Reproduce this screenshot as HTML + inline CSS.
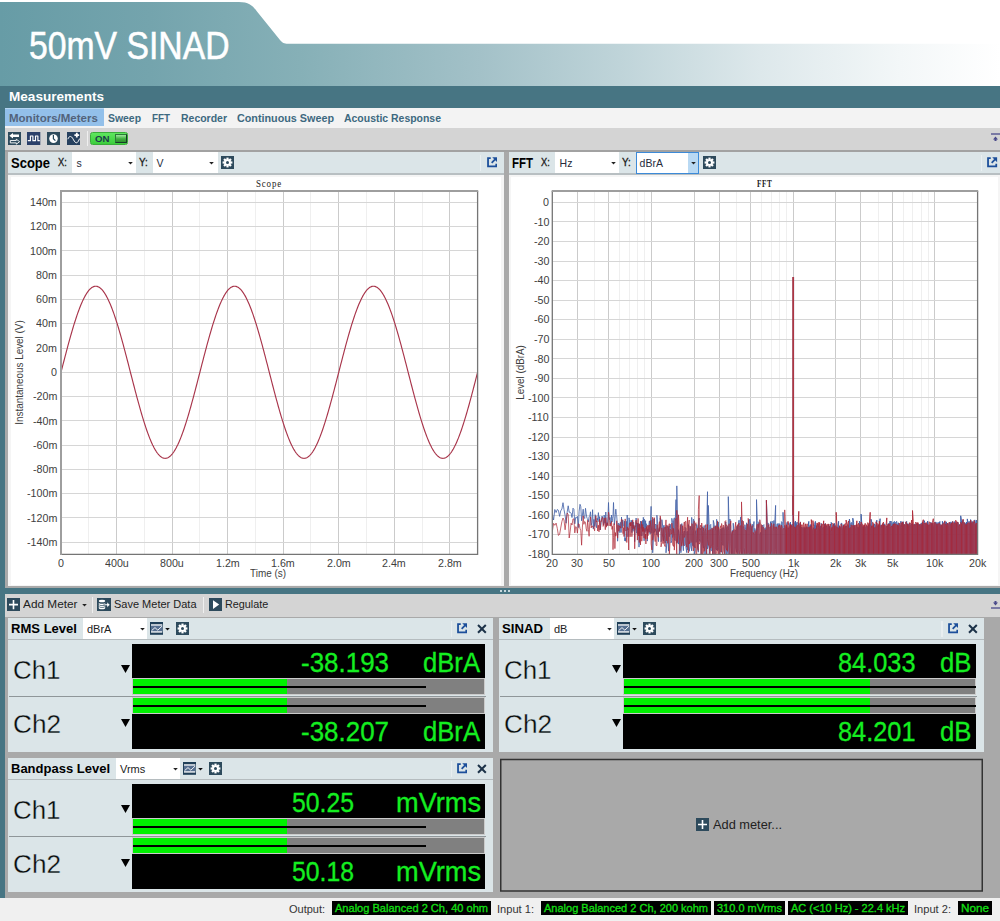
<!DOCTYPE html>
<html><head><meta charset="utf-8"><title>50mV SINAD</title>
<style>
html,body{margin:0;padding:0;background:#fff;}
body{width:1000px;height:921px;position:relative;overflow:hidden;font-family:"Liberation Sans",sans-serif;}
.b{position:absolute;display:block;}
.t{position:absolute;white-space:nowrap;transform-origin:0 50%;}
</style></head><body>
<div class="b" style="left:0px;top:0px;width:1000px;height:86px;background:linear-gradient(90deg,#679ca6 0%,#74a4ad 15%,#86b0b7 30%,#a3c1c8 48%,#bfd4d9 62%,#dde8eb 76%,#f3f7f8 90%,#ffffff 100%);"></div>
<svg class="b" style="left:0px;top:0px;" width="1000" height="46" viewBox="0 0 1000 46"><path d="M0,2 L239,2 C249,2 253,6 257,11.5 L280,40 C282.5,43 284,43.7 288,43.7 L1000,43.7 L1000,0 L0,0 Z" fill="#fff"/></svg>
<div class="t" style="left:29.30px;top:23.60px;font-size:39px;line-height:43.00px;color:#fff;transform:scaleX(0.8646);-webkit-text-stroke:0.55px #fff;">50mV SINAD</div>
<div class="b" style="left:0px;top:86px;width:1000px;height:22px;background:#477583;"></div>
<div class="b" style="left:0px;top:86px;width:5px;height:812px;background:#477583;"></div>
<div class="t" style="left:9.00px;top:89.30px;font-size:13px;line-height:15.00px;color:#fff;font-weight:bold;transform:scaleX(1.0435);">Measurements</div>
<div class="b" style="left:5px;top:108px;width:995px;height:20px;background:#f3f3f3;"></div>
<div class="b" style="left:5px;top:108px;width:99px;height:18px;background:#93c0ea;"></div>
<div class="b" style="left:5px;top:108px;width:99px;height:1px;background:#b5d5f2;"></div>
<div class="t" style="left:9.00px;top:112.00px;font-size:11.5px;line-height:12.00px;color:#52637b;font-weight:bold;">Monitors/Meters</div>
<div class="t" style="left:108.00px;top:112.00px;font-size:11.5px;line-height:12.00px;color:#3d6980;font-weight:bold;transform:scaleX(0.9058);">Sweep</div>
<div class="t" style="left:152.00px;top:112.00px;font-size:11.5px;line-height:12.00px;color:#3d6980;font-weight:bold;transform:scaleX(0.8542);">FFT</div>
<div class="t" style="left:181.00px;top:112.00px;font-size:11.5px;line-height:12.00px;color:#3d6980;font-weight:bold;transform:scaleX(0.9110);">Recorder</div>
<div class="t" style="left:237.00px;top:112.00px;font-size:11.5px;line-height:12.00px;color:#3d6980;font-weight:bold;transform:scaleX(0.9372);">Continuous Sweep</div>
<div class="t" style="left:344.00px;top:112.00px;font-size:11.5px;line-height:12.00px;color:#3d6980;font-weight:bold;transform:scaleX(0.9089);">Acoustic Response</div>
<div class="b" style="left:5px;top:128px;width:995px;height:22px;background:#d4d4d4;"></div>
<div class="b" style="left:5px;top:149.5px;width:995px;height:2.5px;background:#a2a2a2;"></div>
<svg class="b" style="left:8px;top:131.8px;" width="13.3" height="13.2" viewBox="0 0 13.3 13.2"><rect width="13.3" height="13.2" fill="#2d4a5c"/><path d="M1.3,3.8 L5,1 V2.5 H11 V5.1 H5 V6.6 Z" fill="#fff"/><path d="M2.3,8.5 H8.3 V7.2 L11.6,9.7 L8.3,12.2 V10.9 H2.3 Z" fill="none" stroke="#fff" stroke-width="0.9"/></svg>
<svg class="b" style="left:27.3px;top:131.8px;" width="13.3" height="13.2" viewBox="0 0 13.3 13.2"><rect width="13.3" height="13.2" fill="#2b406a"/><path d="M0.8,8.7 H3.4 V4 H5.9 V8.7 H8.5 V4 H10.9 V8.7 H12.8" stroke="#fff" stroke-width="1.15" fill="none" stroke-linejoin="round"/></svg>
<svg class="b" style="left:47.1px;top:131.8px;" width="13.3" height="13.2" viewBox="0 0 13.3 13.2"><rect width="13.3" height="13.2" fill="#2d4a5c"/><circle cx="6.5" cy="6.6" r="4.3" fill="#fff"/><path d="M6.4,3 V6.7 L8.4,8.6" stroke="#24465a" stroke-width="1.2" fill="none"/></svg>
<svg class="b" style="left:66.5px;top:131.8px;" width="13.3" height="13.2" viewBox="0 0 13.3 13.2"><rect width="13.3" height="13.2" fill="#27415f"/><path d="M0.9,7.2 C2,4.2 3,4.4 3.9,4.6 C5.8,5 7.2,10.8 9.4,10.8 C10.8,10.8 11.8,8.5 12.6,6.6" stroke="#fff" stroke-width="1" fill="none"/><path d="M7.4,3.2 H12.2 M9.8,0.8 V5.6" stroke="#fff" stroke-width="1.8"/></svg>
<div class="b" style="left:87px;top:131px;width:1px;height:15px;background:#efefef;"></div>
<div class="b" style="left:90px;top:132px;width:38px;height:13px;border-radius:2.5px;background:linear-gradient(#5fe65f,#48d848 60%,#3ccc3c);border:1px solid #39ad39;box-sizing:border-box"></div>
<div class="t" style="left:95.00px;top:132.80px;font-size:9.5px;line-height:11.00px;color:#1d3a4c;font-weight:bold;transform:scaleX(1.0175);">ON</div>
<div class="b" style="left:114.5px;top:134px;width:12px;height:9px;background:linear-gradient(#9ee89e,#3fae3f 55%,#2f8f2f);border:1px solid #2c7a3a;border-right-color:#173a2a;border-bottom-color:#173a2a;box-sizing:border-box"></div>
<svg class="b" style="left:989px;top:132px;" width="11" height="12" viewBox="0 0 11 12"><path d="M2,2 H11" stroke="#4a4a8a" stroke-width="1.3"/><path d="M6.5,4.5 L9,7.5 H7.5 V9 H5.5 V7.5 H4 Z" fill="#4a4a8a"/></svg>
<div class="b" style="left:5px;top:152px;width:995px;height:436px;background:#a9a9a9;"></div>
<div class="b" style="left:8px;top:152px;width:495.8px;height:21px;background:#dbe5e8;"></div>
<div class="b" style="left:8px;top:173px;width:495.8px;height:1.5px;background:#b8bfc2;"></div>
<div class="b" style="left:8px;top:174.5px;width:495.8px;height:411.5px;background:#f5f5f5;"></div>
<div class="b" style="left:10.5px;top:177px;width:490.8px;height:407.5px;background:#fff;"></div>
<div class="t" style="left:11.00px;top:154.50px;font-size:14px;line-height:16.00px;color:#000;font-weight:bold;transform:scaleX(0.9283);">Scope</div>
<div class="t" style="left:58.30px;top:156.60px;font-size:10px;line-height:11.00px;color:#1a1a1a;transform:scaleX(0.9314);-webkit-text-stroke:0.3px #1a1a1a;">X:</div>
<div class="b" style="left:72px;top:152px;width:64px;height:21px;background:#fff;"></div>
<div class="t" style="left:76.60px;top:157.00px;font-size:10.5px;line-height:12.00px;color:#262b3a;">s</div>
<svg class="b" style="left:128px;top:161.7px;" width="6" height="4" viewBox="0 0 6 4"><path d="M0.2,0 H4.8 L2.5,2.6 Z" fill="#222"/></svg>
<div class="t" style="left:139.30px;top:156.60px;font-size:10px;line-height:11.00px;color:#1a1a1a;transform:scaleX(0.9892);-webkit-text-stroke:0.3px #1a1a1a;">Y:</div>
<div class="b" style="left:153px;top:152px;width:65px;height:21px;background:#fff;"></div>
<div class="t" style="left:156.60px;top:157.00px;font-size:10.5px;line-height:12.00px;color:#262b3a;">V</div>
<svg class="b" style="left:209px;top:161.7px;" width="6" height="4" viewBox="0 0 6 4"><path d="M0.2,0 H4.8 L2.5,2.6 Z" fill="#222"/></svg>
<svg class="b" style="left:221px;top:156px;" width="13" height="13" viewBox="0 0 13 13"><rect width="13" height="13" fill="#2d4a5c"/><rect x="5.4" y="1.6" width="2.2" height="2.6" fill="#fff" transform="rotate(0 6.5 6.5)"/><rect x="5.4" y="1.6" width="2.2" height="2.6" fill="#fff" transform="rotate(45 6.5 6.5)"/><rect x="5.4" y="1.6" width="2.2" height="2.6" fill="#fff" transform="rotate(90 6.5 6.5)"/><rect x="5.4" y="1.6" width="2.2" height="2.6" fill="#fff" transform="rotate(135 6.5 6.5)"/><rect x="5.4" y="1.6" width="2.2" height="2.6" fill="#fff" transform="rotate(180 6.5 6.5)"/><rect x="5.4" y="1.6" width="2.2" height="2.6" fill="#fff" transform="rotate(225 6.5 6.5)"/><rect x="5.4" y="1.6" width="2.2" height="2.6" fill="#fff" transform="rotate(270 6.5 6.5)"/><rect x="5.4" y="1.6" width="2.2" height="2.6" fill="#fff" transform="rotate(315 6.5 6.5)"/><circle cx="6.5" cy="6.5" r="3.3" fill="#fff"/><circle cx="6.5" cy="6.5" r="1.5" fill="#2d4a5c"/></svg>
<div class="b" style="left:480px;top:155px;width:1.2px;height:16px;background:#e9eff1;"></div>
<svg class="b" style="left:486.9px;top:157px;" width="10.3" height="10.6" viewBox="0 0 10.3 10.6"><path transform="scale(0.936 0.964)" d="M4,1.1 H1.1 V9.7 H9.9 V6.9" stroke="#1b4e9a" stroke-width="1.9" fill="none"/><path transform="scale(0.936 0.964)" d="M5,6 L8.6,2.4" stroke="#1b4e9a" stroke-width="1.8"/><path transform="scale(0.936 0.964)" d="M5.6,0.2 H10.8 V5.4 Z" fill="#1b4e9a"/></svg>
<div class="b" style="left:508.5px;top:152px;width:491.5px;height:21px;background:#dbe5e8;"></div>
<div class="b" style="left:508.5px;top:173px;width:491.5px;height:1.5px;background:#b8bfc2;"></div>
<div class="b" style="left:508.5px;top:174.5px;width:491.5px;height:411.5px;background:#f5f5f5;"></div>
<div class="b" style="left:511px;top:177px;width:486.5px;height:407.5px;background:#fff;"></div>
<div class="t" style="left:511.50px;top:154.50px;font-size:14px;line-height:16.00px;color:#000;font-weight:bold;transform:scaleX(0.8185);">FFT</div>
<div class="t" style="left:541.30px;top:156.60px;font-size:10px;line-height:11.00px;color:#1a1a1a;transform:scaleX(0.9314);-webkit-text-stroke:0.3px #1a1a1a;">X:</div>
<div class="b" style="left:555px;top:152px;width:64px;height:21px;background:#fff;"></div>
<div class="t" style="left:559.60px;top:157.00px;font-size:10.5px;line-height:12.00px;color:#262b3a;">Hz</div>
<svg class="b" style="left:611px;top:161.7px;" width="6" height="4" viewBox="0 0 6 4"><path d="M0.2,0 H4.8 L2.5,2.6 Z" fill="#222"/></svg>
<div class="t" style="left:622.30px;top:156.60px;font-size:10px;line-height:11.00px;color:#1a1a1a;transform:scaleX(0.9892);-webkit-text-stroke:0.3px #1a1a1a;">Y:</div>
<div class="b" style="left:636px;top:152px;width:63px;height:22px;background:#fff;border:1px solid #3c8ad8;box-sizing:border-box;"></div>
<div class="b" style="left:688px;top:153px;width:10px;height:20px;background:#b9d9f3;"></div>
<div class="t" style="left:639.60px;top:157.00px;font-size:10.5px;line-height:12.00px;color:#262b3a;">dBrA</div>
<svg class="b" style="left:691px;top:161.7px;" width="6" height="4" viewBox="0 0 6 4"><path d="M0.2,0 H4.8 L2.5,2.6 Z" fill="#222"/></svg>
<svg class="b" style="left:703px;top:156px;" width="13" height="13" viewBox="0 0 13 13"><rect width="13" height="13" fill="#2d4a5c"/><rect x="5.4" y="1.6" width="2.2" height="2.6" fill="#fff" transform="rotate(0 6.5 6.5)"/><rect x="5.4" y="1.6" width="2.2" height="2.6" fill="#fff" transform="rotate(45 6.5 6.5)"/><rect x="5.4" y="1.6" width="2.2" height="2.6" fill="#fff" transform="rotate(90 6.5 6.5)"/><rect x="5.4" y="1.6" width="2.2" height="2.6" fill="#fff" transform="rotate(135 6.5 6.5)"/><rect x="5.4" y="1.6" width="2.2" height="2.6" fill="#fff" transform="rotate(180 6.5 6.5)"/><rect x="5.4" y="1.6" width="2.2" height="2.6" fill="#fff" transform="rotate(225 6.5 6.5)"/><rect x="5.4" y="1.6" width="2.2" height="2.6" fill="#fff" transform="rotate(270 6.5 6.5)"/><rect x="5.4" y="1.6" width="2.2" height="2.6" fill="#fff" transform="rotate(315 6.5 6.5)"/><circle cx="6.5" cy="6.5" r="3.3" fill="#fff"/><circle cx="6.5" cy="6.5" r="1.5" fill="#2d4a5c"/></svg>
<div class="b" style="left:981px;top:155px;width:1.2px;height:16px;background:#e9eff1;"></div>
<svg class="b" style="left:987.4px;top:157px;" width="10.3" height="10.6" viewBox="0 0 10.3 10.6"><path transform="scale(0.936 0.964)" d="M4,1.1 H1.1 V9.7 H9.9 V6.9" stroke="#1b4e9a" stroke-width="1.9" fill="none"/><path transform="scale(0.936 0.964)" d="M5,6 L8.6,2.4" stroke="#1b4e9a" stroke-width="1.8"/><path transform="scale(0.936 0.964)" d="M5.6,0.2 H10.8 V5.4 Z" fill="#1b4e9a"/></svg>
<svg class="b" style="left:0;top:0" width="1000" height="600" viewBox="0 0 1000 600"><path d="M88.5,191.00 V554.40" stroke="#efefef" stroke-width="1"/><path d="M116.5,191.00 V554.40" stroke="#cbcbcb" stroke-width="1"/><path d="M144.5,191.00 V554.40" stroke="#efefef" stroke-width="1"/><path d="M172.5,191.00 V554.40" stroke="#cbcbcb" stroke-width="1"/><path d="M199.5,191.00 V554.40" stroke="#efefef" stroke-width="1"/><path d="M227.5,191.00 V554.40" stroke="#cbcbcb" stroke-width="1"/><path d="M255.5,191.00 V554.40" stroke="#efefef" stroke-width="1"/><path d="M283.5,191.00 V554.40" stroke="#cbcbcb" stroke-width="1"/><path d="M310.5,191.00 V554.40" stroke="#efefef" stroke-width="1"/><path d="M338.5,191.00 V554.40" stroke="#cbcbcb" stroke-width="1"/><path d="M366.5,191.00 V554.40" stroke="#efefef" stroke-width="1"/><path d="M394.5,191.00 V554.40" stroke="#cbcbcb" stroke-width="1"/><path d="M422.5,191.00 V554.40" stroke="#efefef" stroke-width="1"/><path d="M449.5,191.00 V554.40" stroke="#cbcbcb" stroke-width="1"/><path d="M61.00,542.5 H477.60" stroke="#d6d6d6" stroke-width="1"/><path d="M61.00,517.5 H477.60" stroke="#d6d6d6" stroke-width="1"/><path d="M61.00,493.5 H477.60" stroke="#d6d6d6" stroke-width="1"/><path d="M61.00,469.5 H477.60" stroke="#d6d6d6" stroke-width="1"/><path d="M61.00,445.5 H477.60" stroke="#d6d6d6" stroke-width="1"/><path d="M61.00,420.5 H477.60" stroke="#d6d6d6" stroke-width="1"/><path d="M61.00,396.5 H477.60" stroke="#d6d6d6" stroke-width="1"/><path d="M61.00,372.5 H477.60" stroke="#d6d6d6" stroke-width="1"/><path d="M61.00,348.5 H477.60" stroke="#d6d6d6" stroke-width="1"/><path d="M61.00,323.5 H477.60" stroke="#d6d6d6" stroke-width="1"/><path d="M61.00,299.5 H477.60" stroke="#d6d6d6" stroke-width="1"/><path d="M61.00,275.5 H477.60" stroke="#d6d6d6" stroke-width="1"/><path d="M61.00,250.5 H477.60" stroke="#d6d6d6" stroke-width="1"/><path d="M61.00,226.5 H477.60" stroke="#d6d6d6" stroke-width="1"/><path d="M61.00,202.5 H477.60" stroke="#d6d6d6" stroke-width="1"/><polyline points="61.00,372.30 61.69,369.60 62.39,366.90 63.08,364.20 63.78,361.52 64.47,358.84 65.17,356.18 65.86,353.53 66.55,350.90 67.25,348.29 67.94,345.71 68.64,343.15 69.33,340.63 70.03,338.13 70.72,335.67 71.42,333.24 72.11,330.85 72.80,328.50 73.50,326.20 74.19,323.94 74.89,321.73 75.58,319.56 76.28,317.45 76.97,315.40 77.66,313.40 78.36,311.46 79.05,309.58 79.75,307.76 80.44,306.00 81.14,304.31 81.83,302.69 82.52,301.14 83.22,299.65 83.91,298.24 84.61,296.90 85.30,295.64 86.00,294.45 86.69,293.33 87.38,292.30 88.08,291.34 88.77,290.47 89.47,289.67 90.16,288.96 90.86,288.33 91.55,287.78 92.25,287.32 92.94,286.94 93.63,286.64 94.33,286.43 95.02,286.30 95.72,286.26 96.41,286.30 97.11,286.43 97.80,286.64 98.49,286.94 99.19,287.32 99.88,287.78 100.58,288.33 101.27,288.96 101.97,289.67 102.66,290.47 103.35,291.34 104.05,292.30 104.74,293.33 105.44,294.45 106.13,295.64 106.83,296.90 107.52,298.24 108.21,299.65 108.91,301.14 109.60,302.69 110.30,304.31 110.99,306.00 111.69,307.76 112.38,309.58 113.08,311.46 113.77,313.40 114.46,315.40 115.16,317.45 115.85,319.56 116.55,321.73 117.24,323.94 117.94,326.20 118.63,328.50 119.32,330.85 120.02,333.24 120.71,335.67 121.41,338.13 122.10,340.63 122.80,343.15 123.49,345.71 124.18,348.29 124.88,350.90 125.57,353.53 126.27,356.18 126.96,358.84 127.66,361.52 128.35,364.20 129.04,366.90 129.74,369.60 130.43,372.30 131.13,375.00 131.82,377.70 132.52,380.40 133.21,383.08 133.91,385.76 134.60,388.42 135.29,391.07 135.99,393.70 136.68,396.31 137.38,398.89 138.07,401.45 138.77,403.97 139.46,406.47 140.15,408.93 140.85,411.36 141.54,413.75 142.24,416.10 142.93,418.40 143.63,420.66 144.32,422.87 145.01,425.04 145.71,427.15 146.40,429.20 147.10,431.20 147.79,433.14 148.49,435.02 149.18,436.84 149.87,438.60 150.57,440.29 151.26,441.91 151.96,443.46 152.65,444.95 153.35,446.36 154.04,447.70 154.74,448.96 155.43,450.15 156.12,451.27 156.82,452.30 157.51,453.26 158.21,454.13 158.90,454.93 159.60,455.64 160.29,456.27 160.98,456.82 161.68,457.28 162.37,457.66 163.07,457.96 163.76,458.17 164.46,458.30 165.15,458.34 165.84,458.30 166.54,458.17 167.23,457.96 167.93,457.66 168.62,457.28 169.32,456.82 170.01,456.27 170.70,455.64 171.40,454.93 172.09,454.13 172.79,453.26 173.48,452.30 174.18,451.27 174.87,450.15 175.56,448.96 176.26,447.70 176.95,446.36 177.65,444.95 178.34,443.46 179.04,441.91 179.73,440.29 180.43,438.60 181.12,436.84 181.81,435.02 182.51,433.14 183.20,431.20 183.90,429.20 184.59,427.15 185.29,425.04 185.98,422.87 186.67,420.66 187.37,418.40 188.06,416.10 188.76,413.75 189.45,411.36 190.15,408.93 190.84,406.47 191.53,403.97 192.23,401.45 192.92,398.89 193.62,396.31 194.31,393.70 195.01,391.07 195.70,388.42 196.40,385.76 197.09,383.08 197.78,380.40 198.48,377.70 199.17,375.00 199.87,372.30 200.56,369.60 201.26,366.90 201.95,364.20 202.64,361.52 203.34,358.84 204.03,356.18 204.73,353.53 205.42,350.90 206.12,348.29 206.81,345.71 207.50,343.15 208.20,340.63 208.89,338.13 209.59,335.67 210.28,333.24 210.98,330.85 211.67,328.50 212.36,326.20 213.06,323.94 213.75,321.73 214.45,319.56 215.14,317.45 215.84,315.40 216.53,313.40 217.23,311.46 217.92,309.58 218.61,307.76 219.31,306.00 220.00,304.31 220.70,302.69 221.39,301.14 222.09,299.65 222.78,298.24 223.47,296.90 224.17,295.64 224.86,294.45 225.56,293.33 226.25,292.30 226.95,291.34 227.64,290.47 228.33,289.67 229.03,288.96 229.72,288.33 230.42,287.78 231.11,287.32 231.81,286.94 232.50,286.64 233.19,286.43 233.89,286.30 234.58,286.26 235.28,286.30 235.97,286.43 236.67,286.64 237.36,286.94 238.06,287.32 238.75,287.78 239.44,288.33 240.14,288.96 240.83,289.67 241.53,290.47 242.22,291.34 242.92,292.30 243.61,293.33 244.30,294.45 245.00,295.64 245.69,296.90 246.39,298.24 247.08,299.65 247.78,301.14 248.47,302.69 249.16,304.31 249.86,306.00 250.55,307.76 251.25,309.58 251.94,311.46 252.64,313.40 253.33,315.40 254.02,317.45 254.72,319.56 255.41,321.73 256.11,323.94 256.80,326.20 257.50,328.50 258.19,330.85 258.88,333.24 259.58,335.67 260.27,338.13 260.97,340.63 261.66,343.15 262.36,345.71 263.05,348.29 263.75,350.90 264.44,353.53 265.13,356.18 265.83,358.84 266.52,361.52 267.22,364.20 267.91,366.90 268.61,369.60 269.30,372.30 269.99,375.00 270.69,377.70 271.38,380.40 272.08,383.08 272.77,385.76 273.47,388.42 274.16,391.07 274.85,393.70 275.55,396.31 276.24,398.89 276.94,401.45 277.63,403.97 278.33,406.47 279.02,408.93 279.72,411.36 280.41,413.75 281.10,416.10 281.80,418.40 282.49,420.66 283.19,422.87 283.88,425.04 284.58,427.15 285.27,429.20 285.96,431.20 286.66,433.14 287.35,435.02 288.05,436.84 288.74,438.60 289.44,440.29 290.13,441.91 290.82,443.46 291.52,444.95 292.21,446.36 292.91,447.70 293.60,448.96 294.30,450.15 294.99,451.27 295.68,452.30 296.38,453.26 297.07,454.13 297.77,454.93 298.46,455.64 299.16,456.27 299.85,456.82 300.55,457.28 301.24,457.66 301.93,457.96 302.63,458.17 303.32,458.30 304.02,458.34 304.71,458.30 305.41,458.17 306.10,457.96 306.79,457.66 307.49,457.28 308.18,456.82 308.88,456.27 309.57,455.64 310.27,454.93 310.96,454.13 311.65,453.26 312.35,452.30 313.04,451.27 313.74,450.15 314.43,448.96 315.13,447.70 315.82,446.36 316.51,444.95 317.21,443.46 317.90,441.91 318.60,440.29 319.29,438.60 319.99,436.84 320.68,435.02 321.38,433.14 322.07,431.20 322.76,429.20 323.46,427.15 324.15,425.04 324.85,422.87 325.54,420.66 326.24,418.40 326.93,416.10 327.62,413.75 328.32,411.36 329.01,408.93 329.71,406.47 330.40,403.97 331.10,401.45 331.79,398.89 332.48,396.31 333.18,393.70 333.87,391.07 334.57,388.42 335.26,385.76 335.96,383.08 336.65,380.40 337.34,377.70 338.04,375.00 338.73,372.30 339.43,369.60 340.12,366.90 340.82,364.20 341.51,361.52 342.20,358.84 342.90,356.18 343.59,353.53 344.29,350.90 344.98,348.29 345.68,345.71 346.37,343.15 347.07,340.63 347.76,338.13 348.45,335.67 349.15,333.24 349.84,330.85 350.54,328.50 351.23,326.20 351.93,323.94 352.62,321.73 353.31,319.56 354.01,317.45 354.70,315.40 355.40,313.40 356.09,311.46 356.79,309.58 357.48,307.76 358.17,306.00 358.87,304.31 359.56,302.69 360.26,301.14 360.95,299.65 361.65,298.24 362.34,296.90 363.03,295.64 363.73,294.45 364.42,293.33 365.12,292.30 365.81,291.34 366.51,290.47 367.20,289.67 367.90,288.96 368.59,288.33 369.28,287.78 369.98,287.32 370.67,286.94 371.37,286.64 372.06,286.43 372.76,286.30 373.45,286.26 374.14,286.30 374.84,286.43 375.53,286.64 376.23,286.94 376.92,287.32 377.62,287.78 378.31,288.33 379.00,288.96 379.70,289.67 380.39,290.47 381.09,291.34 381.78,292.30 382.48,293.33 383.17,294.45 383.87,295.64 384.56,296.90 385.25,298.24 385.95,299.65 386.64,301.14 387.34,302.69 388.03,304.31 388.73,306.00 389.42,307.76 390.11,309.58 390.81,311.46 391.50,313.40 392.20,315.40 392.89,317.45 393.59,319.56 394.28,321.73 394.97,323.94 395.67,326.20 396.36,328.50 397.06,330.85 397.75,333.24 398.45,335.67 399.14,338.13 399.83,340.63 400.53,343.15 401.22,345.71 401.92,348.29 402.61,350.90 403.31,353.53 404.00,356.18 404.70,358.84 405.39,361.52 406.08,364.20 406.78,366.90 407.47,369.60 408.17,372.30 408.86,375.00 409.56,377.70 410.25,380.40 410.94,383.08 411.64,385.76 412.33,388.42 413.03,391.07 413.72,393.70 414.42,396.31 415.11,398.89 415.80,401.45 416.50,403.97 417.19,406.47 417.89,408.93 418.58,411.36 419.28,413.75 419.97,416.10 420.66,418.40 421.36,420.66 422.05,422.87 422.75,425.04 423.44,427.15 424.14,429.20 424.83,431.20 425.53,433.14 426.22,435.02 426.91,436.84 427.61,438.60 428.30,440.29 429.00,441.91 429.69,443.46 430.39,444.95 431.08,446.36 431.77,447.70 432.47,448.96 433.16,450.15 433.86,451.27 434.55,452.30 435.25,453.26 435.94,454.13 436.63,454.93 437.33,455.64 438.02,456.27 438.72,456.82 439.41,457.28 440.11,457.66 440.80,457.96 441.49,458.17 442.19,458.30 442.88,458.34 443.58,458.30 444.27,458.17 444.97,457.96 445.66,457.66 446.36,457.28 447.05,456.82 447.74,456.27 448.44,455.64 449.13,454.93 449.83,454.13 450.52,453.26 451.22,452.30 451.91,451.27 452.60,450.15 453.30,448.96 453.99,447.70 454.69,446.36 455.38,444.95 456.08,443.46 456.77,441.91 457.46,440.29 458.16,438.60 458.85,436.84 459.55,435.02 460.24,433.14 460.94,431.20 461.63,429.20 462.32,427.15 463.02,425.04 463.71,422.87 464.41,420.66 465.10,418.40 465.80,416.10 466.49,413.75 467.19,411.36 467.88,408.93 468.57,406.47 469.27,403.97 469.96,401.45 470.66,398.89 471.35,396.31 472.05,393.70 472.74,391.07 473.43,388.42 474.13,385.76 474.82,383.08 475.52,380.40 476.21,377.70 476.91,375.00 477.60,372.30" fill="none" stroke="#a8344a" stroke-width="1.15"/><path d="M477.60,191.00 V554.40 H61.00" fill="none" stroke="#757575" stroke-width="1.3"/><path d="M61.00,555.00 V191.00 H478.20" fill="none" stroke="#9e9e9e" stroke-width="2"/></svg>
<div class="t" style="left:26.69px;top:535.90px;font-size:11.5px;line-height:12.00px;color:#3e3e3e;transform:scaleX(0.9300);">-140m</div>
<div class="t" style="left:26.69px;top:511.63px;font-size:11.5px;line-height:12.00px;color:#3e3e3e;transform:scaleX(0.9300);">-120m</div>
<div class="t" style="left:26.69px;top:487.36px;font-size:11.5px;line-height:12.00px;color:#3e3e3e;transform:scaleX(0.9300);">-100m</div>
<div class="t" style="left:32.63px;top:463.09px;font-size:11.5px;line-height:12.00px;color:#3e3e3e;transform:scaleX(0.9300);">-80m</div>
<div class="t" style="left:32.63px;top:438.81px;font-size:11.5px;line-height:12.00px;color:#3e3e3e;transform:scaleX(0.9300);">-60m</div>
<div class="t" style="left:32.63px;top:414.54px;font-size:11.5px;line-height:12.00px;color:#3e3e3e;transform:scaleX(0.9300);">-40m</div>
<div class="t" style="left:32.63px;top:390.27px;font-size:11.5px;line-height:12.00px;color:#3e3e3e;transform:scaleX(0.9300);">-20m</div>
<div class="t" style="left:51.05px;top:366.00px;font-size:11.5px;line-height:12.00px;color:#3e3e3e;transform:scaleX(0.9300);">0</div>
<div class="t" style="left:36.19px;top:341.73px;font-size:11.5px;line-height:12.00px;color:#3e3e3e;transform:scaleX(0.9300);">20m</div>
<div class="t" style="left:36.19px;top:317.46px;font-size:11.5px;line-height:12.00px;color:#3e3e3e;transform:scaleX(0.9300);">40m</div>
<div class="t" style="left:36.19px;top:293.19px;font-size:11.5px;line-height:12.00px;color:#3e3e3e;transform:scaleX(0.9300);">60m</div>
<div class="t" style="left:36.19px;top:268.91px;font-size:11.5px;line-height:12.00px;color:#3e3e3e;transform:scaleX(0.9300);">80m</div>
<div class="t" style="left:30.25px;top:244.64px;font-size:11.5px;line-height:12.00px;color:#3e3e3e;transform:scaleX(0.9300);">100m</div>
<div class="t" style="left:30.25px;top:220.37px;font-size:11.5px;line-height:12.00px;color:#3e3e3e;transform:scaleX(0.9300);">120m</div>
<div class="t" style="left:30.25px;top:196.10px;font-size:11.5px;line-height:12.00px;color:#3e3e3e;transform:scaleX(0.9300);">140m</div>
<div class="t" style="left:58.03px;top:557.30px;font-size:11.5px;line-height:12.00px;color:#3e3e3e;transform:scaleX(0.9300);">0</div>
<div class="t" style="left:104.65px;top:557.30px;font-size:11.5px;line-height:12.00px;color:#3e3e3e;transform:scaleX(0.9300);">400u</div>
<div class="t" style="left:160.20px;top:557.30px;font-size:11.5px;line-height:12.00px;color:#3e3e3e;transform:scaleX(0.9300);">800u</div>
<div class="t" style="left:215.75px;top:557.30px;font-size:11.5px;line-height:12.00px;color:#3e3e3e;transform:scaleX(0.9300);">1.2m</div>
<div class="t" style="left:271.30px;top:557.30px;font-size:11.5px;line-height:12.00px;color:#3e3e3e;transform:scaleX(0.9300);">1.6m</div>
<div class="t" style="left:326.84px;top:557.30px;font-size:11.5px;line-height:12.00px;color:#3e3e3e;transform:scaleX(0.9300);">2.0m</div>
<div class="t" style="left:382.39px;top:557.30px;font-size:11.5px;line-height:12.00px;color:#3e3e3e;transform:scaleX(0.9300);">2.4m</div>
<div class="t" style="left:437.94px;top:557.30px;font-size:11.5px;line-height:12.00px;color:#3e3e3e;transform:scaleX(0.9300);">2.8m</div>
<div class="t" style="left:250.00px;top:567.30px;font-size:11.5px;line-height:12.00px;color:#3e3e3e;transform:scaleX(0.8626);">Time (s)</div>
<div class="t" style="left:256.00px;top:179.00px;font-size:9.5px;line-height:11.00px;color:#1a1a1a;font-family:'Liberation Serif',serif;transform:scaleX(0.9381);letter-spacing:0.9px;">Scope</div>
<div class="t" style="left:-80.8px;top:365.5px;font-size:11.5px;line-height:13px;color:#3e3e3e;width:200px;text-align:center;transform:rotate(-90deg) scaleX(0.8603);transform-origin:50% 50%">Instantaneous Level (V)</div>
<svg class="b" style="left:0;top:0" width="1000" height="600" viewBox="0 0 1000 600"><path d="M594.5,191.00 V554.40" stroke="#efefef" stroke-width="1"/><path d="M619.5,191.00 V554.40" stroke="#efefef" stroke-width="1"/><path d="M629.5,191.00 V554.40" stroke="#efefef" stroke-width="1"/><path d="M637.5,191.00 V554.40" stroke="#efefef" stroke-width="1"/><path d="M644.5,191.00 V554.40" stroke="#efefef" stroke-width="1"/><path d="M736.5,191.00 V554.40" stroke="#efefef" stroke-width="1"/><path d="M761.5,191.00 V554.40" stroke="#efefef" stroke-width="1"/><path d="M771.5,191.00 V554.40" stroke="#efefef" stroke-width="1"/><path d="M779.5,191.00 V554.40" stroke="#efefef" stroke-width="1"/><path d="M786.5,191.00 V554.40" stroke="#efefef" stroke-width="1"/><path d="M878.5,191.00 V554.40" stroke="#efefef" stroke-width="1"/><path d="M903.5,191.00 V554.40" stroke="#efefef" stroke-width="1"/><path d="M912.5,191.00 V554.40" stroke="#efefef" stroke-width="1"/><path d="M921.5,191.00 V554.40" stroke="#efefef" stroke-width="1"/><path d="M928.5,191.00 V554.40" stroke="#efefef" stroke-width="1"/><path d="M577.5,191.00 V554.40" stroke="#cbcbcb" stroke-width="1"/><path d="M608.5,191.00 V554.40" stroke="#cbcbcb" stroke-width="1"/><path d="M651.5,191.00 V554.40" stroke="#cbcbcb" stroke-width="1"/><path d="M694.5,191.00 V554.40" stroke="#cbcbcb" stroke-width="1"/><path d="M719.5,191.00 V554.40" stroke="#cbcbcb" stroke-width="1"/><path d="M750.5,191.00 V554.40" stroke="#cbcbcb" stroke-width="1"/><path d="M793.5,191.00 V554.40" stroke="#cbcbcb" stroke-width="1"/><path d="M835.5,191.00 V554.40" stroke="#cbcbcb" stroke-width="1"/><path d="M860.5,191.00 V554.40" stroke="#cbcbcb" stroke-width="1"/><path d="M892.5,191.00 V554.40" stroke="#cbcbcb" stroke-width="1"/><path d="M934.5,191.00 V554.40" stroke="#cbcbcb" stroke-width="1"/><path d="M552.30,202.5 H977.60" stroke="#d6d6d6" stroke-width="1"/><path d="M552.30,221.5 H977.60" stroke="#d6d6d6" stroke-width="1"/><path d="M552.30,241.5 H977.60" stroke="#d6d6d6" stroke-width="1"/><path d="M552.30,261.5 H977.60" stroke="#d6d6d6" stroke-width="1"/><path d="M552.30,280.5 H977.60" stroke="#d6d6d6" stroke-width="1"/><path d="M552.30,300.5 H977.60" stroke="#d6d6d6" stroke-width="1"/><path d="M552.30,319.5 H977.60" stroke="#d6d6d6" stroke-width="1"/><path d="M552.30,339.5 H977.60" stroke="#d6d6d6" stroke-width="1"/><path d="M552.30,358.5 H977.60" stroke="#d6d6d6" stroke-width="1"/><path d="M552.30,378.5 H977.60" stroke="#d6d6d6" stroke-width="1"/><path d="M552.30,397.5 H977.60" stroke="#d6d6d6" stroke-width="1"/><path d="M552.30,417.5 H977.60" stroke="#d6d6d6" stroke-width="1"/><path d="M552.30,437.5 H977.60" stroke="#d6d6d6" stroke-width="1"/><path d="M552.30,456.5 H977.60" stroke="#d6d6d6" stroke-width="1"/><path d="M552.30,476.5 H977.60" stroke="#d6d6d6" stroke-width="1"/><path d="M552.30,495.5 H977.60" stroke="#d6d6d6" stroke-width="1"/><path d="M552.30,515.5 H977.60" stroke="#d6d6d6" stroke-width="1"/><path d="M552.30,534.5 H977.60" stroke="#d6d6d6" stroke-width="1"/><clipPath id="fc"><rect x="552.30" y="191.00" width="425.30" height="363.40"/></clipPath><g clip-path="url(#fc)"><polyline points="552.3,513.7 553.6,520.0 554.8,509.5 556.1,512.5 557.3,509.5 558.4,510.3 559.6,516.4 560.7,510.9 561.9,509.0 563.0,502.7 564.0,509.6 565.1,515.4 566.1,523.2 567.2,511.9 568.2,505.8 569.2,512.2 570.1,512.2 571.1,513.2 572.0,517.5 573.0,508.2 573.9,509.3 574.8,523.8 575.7,517.4 576.6,517.9 577.4,516.4 578.3,527.6 579.1,511.2 580.0,504.3 580.8,506.7 581.6,520.8 582.4,515.0 583.2,509.2 583.9,517.2 584.7,518.5 585.5,508.3 586.2,513.9 587.0,518.4 587.7,519.0 588.4,521.8 589.1,516.8 589.8,516.0 590.5,511.8 591.2,525.3 591.9,522.5 592.6,509.7 593.3,528.9 593.9,519.4 594.6,526.5 595.2,514.7 595.9,524.8 596.5,527.7 597.1,518.2 597.7,520.4 598.4,512.6 599.0,521.8 599.6,516.6 600.2,530.0 600.8,525.7 601.3,521.4 601.9,516.0 602.5,516.7 603.1,519.9 603.6,525.0 604.2,515.1 604.7,523.2 605.3,522.8 605.8,512.0 606.4,526.0 606.9,522.7 607.4,525.3 608.0,516.2 608.5,502.5 609.0,516.2 609.5,519.7 610.0,517.5 610.5,523.7 611.0,521.9 611.5,515.0 612.0,522.0 612.5,518.5 613.0,516.2 613.5,502.5 614.0,516.2 614.4,524.8 614.9,520.0 615.4,514.4 615.8,509.2 616.3,514.3 616.7,515.7 617.2,522.8 617.6,541.2 618.1,531.2 618.5,523.1 619.0,523.6 619.4,524.0 619.8,532.6 620.3,522.4 620.7,522.4 621.1,532.5 621.5,517.0 622.0,527.9 622.4,523.9 622.8,519.8 623.2,524.0 623.6,524.5 624.0,526.6 624.4,521.2 624.8,540.9 625.2,537.9 625.6,541.2 626.0,537.8 626.4,521.3 626.8,530.9 627.2,515.0 627.5,522.0 627.9,536.8 628.3,533.0 628.7,530.8 629.0,517.8 629.4,519.6 629.8,523.7 630.1,525.3 630.5,525.5 630.9,522.2 631.2,520.1 631.6,522.2 631.9,532.6 632.3,520.7 632.7,530.3 633.0,529.6 633.3,522.7 633.7,522.1 634.0,531.3 634.4,526.7 634.7,541.7 635.1,525.6 635.4,526.7 635.7,526.8 636.1,518.0 636.4,522.4 636.7,533.1 637.0,533.2 637.4,523.1 637.7,529.3 638.0,534.7 638.3,528.4 638.7,523.3 639.0,547.1 639.3,536.3 639.6,524.7 639.9,535.9 640.2,530.4 640.5,521.1 640.8,523.2 641.2,528.4 641.5,524.1 641.8,536.0 642.1,531.3 642.4,526.5 642.7,520.3 643.0,531.0 643.3,517.3 643.5,519.9 643.8,528.1 644.1,540.8 644.4,519.2 644.7,520.0 645.0,532.4 645.3,527.3 645.6,520.7 645.9,531.1 646.1,529.8 646.4,523.7 646.7,524.8 647.0,529.6 647.3,541.1 647.8,528.9 647.8,532.6 648.6,531.0 648.6,527.7 649.4,521.0 649.4,530.6 650.2,534.1 650.2,532.7 651.1,506.4 651.1,533.2 651.9,525.8 651.9,520.1 652.7,533.6 652.7,552.8 653.6,534.9 653.6,518.9 654.4,519.1 654.4,532.5 655.2,530.2 655.2,524.8 656.0,524.0 656.0,527.5 656.9,535.1 656.9,515.2 657.7,524.7 657.7,531.8 658.5,541.6 658.5,529.9 659.4,527.5 659.4,531.1 660.2,525.6 660.2,517.8 661.0,531.6 661.0,541.7 661.9,540.2 661.9,519.7 662.7,526.2 662.7,536.2 663.5,540.8 663.5,525.6 664.3,525.4 664.3,534.7 665.2,543.0 665.2,527.4 666.0,527.2 666.0,552.8 666.8,543.9 666.8,526.0 667.7,526.2 667.7,534.6 668.5,551.1 668.5,527.8 669.3,526.0 669.3,536.7 670.2,529.0 670.2,524.2 671.0,529.3 671.0,542.9 671.8,540.5 671.8,518.3 672.6,522.8 672.6,537.5 673.5,533.7 673.5,520.6 674.3,517.8 674.3,538.9 675.1,540.6 675.1,526.5 676.0,499.6 676.0,538.2 676.8,543.4 676.8,485.9 677.6,527.3 677.6,541.5 678.5,544.1 678.5,529.7 679.3,537.3 679.3,557.2 680.1,541.7 680.1,531.5 680.9,524.7 680.9,552.7 681.8,541.9 681.8,523.6 682.6,533.3 682.6,539.0 683.4,550.7 683.4,534.8 684.3,531.0 684.3,545.8 685.1,545.0 685.1,527.4 685.9,528.2 685.9,547.2 686.8,552.7 686.8,531.6 687.6,531.4 687.6,550.0 688.4,545.3 688.4,524.7 689.2,528.1 689.2,551.4 690.1,546.3 690.1,528.1 690.9,526.6 690.9,545.3 691.7,550.9 691.7,517.4 692.6,530.9 692.6,545.5 693.4,546.4 693.4,519.2 694.2,521.4 694.2,554.2 695.1,550.9 695.1,534.4 695.9,530.5 695.9,542.4 696.7,541.8 696.7,524.4 697.5,528.5 697.5,548.8 698.4,552.2 698.4,522.9 699.2,518.1 699.2,538.6 700.0,541.5 700.0,528.0 700.9,530.7 700.9,557.2 701.7,556.5 701.7,526.6 702.5,527.0 702.5,543.4 703.4,548.2 703.4,531.3 704.2,525.5 704.2,557.2 705.0,557.2 705.0,531.4 705.8,528.5 705.8,555.5 706.7,554.5 706.7,529.5 707.5,491.7 707.5,548.9 708.3,546.0 708.3,505.4 709.2,526.3 709.2,553.7 710.0,551.3 710.0,525.6 710.8,524.4 710.8,550.3 711.7,550.8 711.7,528.1 712.5,528.8 712.5,557.2 713.3,545.4 713.3,520.4 714.1,523.8 714.1,557.2 715.0,557.2 715.0,525.6 715.8,531.1 715.8,549.0 716.6,550.0 716.6,519.3 717.5,523.5 717.5,550.7 718.3,549.2 718.3,521.9 719.1,538.9 719.1,557.2 720.0,557.2 720.0,529.4 720.8,529.5 720.8,543.6 721.6,552.3 721.6,528.6 722.4,528.2 722.4,545.0 723.3,545.4 723.3,527.4 724.1,529.4 724.1,557.2 724.9,557.2 724.9,530.0 725.8,522.0 725.8,551.3 726.6,557.2 726.6,527.9 727.4,526.5 727.4,553.6 728.3,557.2 728.3,496.6 729.1,525.2 729.1,557.2 729.9,557.2 729.9,519.0 730.8,526.4 730.8,543.8 731.6,557.2 731.6,534.5 732.4,530.3 732.4,557.2 733.2,557.2 733.2,523.2 734.1,533.2 734.1,557.2 734.9,552.6 734.9,531.0 735.7,529.9 735.7,548.2 736.6,552.5 736.6,526.5 737.4,526.4 737.4,557.2 738.2,557.2 738.2,525.4 739.0,520.2 739.0,556.6 739.9,555.6 739.9,523.8 740.7,516.9 740.7,549.6 741.5,554.2 741.5,522.0 742.4,520.4 742.4,557.2 743.2,549.8 743.2,526.4 744.0,527.9 744.0,554.4 744.9,547.5 744.9,524.7 745.7,529.7 745.7,557.2 746.5,557.2 746.5,522.8 747.3,526.4 747.3,557.2 748.2,557.2 748.2,523.5 749.0,519.9 749.0,557.2 749.8,557.2 749.8,519.0 750.7,527.4 750.7,557.2 751.5,557.2 751.5,527.0 752.3,524.1 752.3,556.2 753.2,555.4 753.2,527.8 754.0,521.5 754.0,554.4 754.8,557.2 754.8,528.4 755.6,531.4 755.6,557.2 756.5,552.6 756.5,499.6 757.3,520.4 757.3,557.2 758.1,557.2 758.1,528.6 759.0,521.7 759.0,557.2 759.8,557.2 759.8,535.1 760.6,532.4 760.6,554.5 761.5,557.2 761.5,526.3 762.3,525.1 762.3,557.2 763.1,557.2 763.1,525.5 763.9,524.6 763.9,557.2 764.8,557.2 764.8,528.3 765.6,527.8 765.6,557.2 766.4,557.2 766.4,500.5 767.3,523.6 767.3,557.2 768.1,557.2 768.1,522.9 768.9,529.7 768.9,557.2 769.8,557.2 769.8,529.5 770.6,521.6 770.6,557.2 771.4,557.2 771.4,524.7 772.2,521.1 772.2,557.2 773.1,557.2 773.1,529.0 773.9,520.5 773.9,557.2 774.7,554.8 774.7,524.0 775.6,505.4 775.6,549.5 776.4,557.2 776.4,529.5 777.2,523.8 777.2,557.2 778.1,557.2 778.1,523.4 778.9,529.7 778.9,557.2 779.7,557.2 779.7,523.6 780.5,527.7 780.5,557.2 781.4,557.2 781.4,521.6 782.2,522.4 782.2,557.2 783.0,557.2 783.0,512.3 783.9,525.2 783.9,557.2 784.7,557.2 784.7,525.4 785.5,530.0 785.5,557.2 786.4,557.2 786.4,526.7" fill="none" stroke="#4462a8" stroke-width="0.82" stroke-linejoin="round"/><polyline points="786.4,557.2 786.4,526.7 787.2,522.3 787.2,557.2 788.0,557.2 788.0,528.2 788.8,527.9 788.8,557.2 789.7,557.2 789.7,523.4 790.5,522.1 790.5,557.2 791.3,557.2 791.3,527.9 792.2,524.1 792.2,557.2 793.0,557.2 793.0,495.6 793.8,527.3 793.8,557.2 794.7,557.2 794.7,522.7 795.5,521.0 795.5,557.2 796.3,557.2 796.3,525.0 797.1,522.1 797.1,556.9 798.0,557.2 798.0,526.8 798.8,523.3 798.8,557.2 799.6,557.2 799.6,525.3 800.5,521.9 800.5,557.2 801.3,557.2 801.3,527.2 802.1,528.0 802.1,557.2 803.0,557.2 803.0,527.3 803.8,528.6 803.8,557.2 804.6,557.2 804.6,527.4 805.4,527.6 805.4,557.2 806.3,557.2 806.3,527.0 807.1,527.1 807.1,557.2 807.9,557.2 807.9,528.1 808.8,521.4 808.8,557.2 809.6,557.2 809.6,526.4 810.4,524.7 810.4,557.2 811.3,557.2 811.3,524.5 812.1,531.0 812.1,557.2 812.9,557.2 812.9,529.6 813.8,527.5 813.8,557.2 814.6,557.2 814.6,524.7 815.4,521.4 815.4,557.2 816.2,557.2 816.2,525.5 817.1,529.6 817.1,557.2 817.9,557.2 817.9,524.0 818.7,527.4 818.7,557.2 819.6,557.2 819.6,528.6 820.4,525.9 820.4,557.2 821.2,557.2 821.2,523.4 822.0,524.4 822.0,557.2 822.9,557.2 822.9,527.6 823.7,526.9 823.7,557.2 824.5,557.2 824.5,524.0 825.4,523.7 825.4,557.2 826.2,557.2 826.2,526.1 827.0,527.8 827.0,557.2 827.9,557.2 827.9,526.0 828.7,524.4 828.7,557.2 829.5,557.2 829.5,526.3 830.3,529.3 830.3,557.2 831.2,557.2 831.2,522.4 832.0,525.5 832.0,557.2 832.8,557.2 832.8,526.7 833.7,524.1 833.7,557.2 834.5,557.2 834.5,523.4 835.3,527.7 835.3,557.2 836.2,557.2 836.2,526.8 837.0,527.6 837.0,557.2 837.8,557.2 837.8,525.9 838.6,521.3 838.6,557.2 839.5,557.2 839.5,526.7 840.3,526.7 840.3,557.2 841.1,557.2 841.1,523.3 842.0,523.5 842.0,557.2 842.8,557.2 842.8,527.9 843.6,524.7 843.6,557.2 844.5,557.2 844.5,529.7 845.3,526.2 845.3,557.2 846.1,557.2 846.1,526.0 846.9,526.9 846.9,557.2 847.8,557.2 847.8,524.5 848.6,527.1 848.6,557.2 849.4,557.2 849.4,519.0 850.3,524.7 850.3,557.2 851.1,557.2 851.1,523.1 851.9,522.5 851.9,557.2 852.8,557.2 852.8,518.2 853.6,522.1 853.6,557.2 854.4,557.2 854.4,525.4 855.2,528.5 855.2,557.2 856.1,557.2 856.1,526.1 856.9,524.6 856.9,557.2 857.7,557.2 857.7,527.1 858.6,527.4 858.6,557.2 859.4,557.2 859.4,521.2 860.2,524.2 860.2,557.2 861.1,557.2 861.1,514.2 861.9,524.6 861.9,557.2 862.7,557.2 862.7,526.6 863.5,526.7 863.5,557.2 864.4,557.2 864.4,525.0 865.2,528.2 865.2,557.2 866.0,557.2 866.0,526.8 866.9,526.4 866.9,557.2 867.7,557.2 867.7,527.0 868.5,525.1 868.5,557.2 869.4,557.2 869.4,522.8 870.2,524.5 870.2,557.2 871.0,557.2 871.0,519.2 871.8,522.2 871.8,557.2 872.7,557.2 872.7,525.8 873.5,525.2 873.5,557.2 874.3,557.2 874.3,523.8 875.2,525.3 875.2,557.2 876.0,557.2 876.0,526.7 876.8,520.2 876.8,557.2 877.7,557.2 877.7,525.6 878.5,525.4 878.5,557.2 879.3,557.2 879.3,524.0 880.1,518.7 880.1,557.2 881.0,557.2 881.0,525.1 881.8,528.1 881.8,557.2 882.6,557.2 882.6,523.8 883.5,524.7 883.5,557.2 884.3,557.2 884.3,523.8 885.1,525.0 885.1,557.2 886.0,557.2 886.0,528.2 886.8,526.0 886.8,557.2 887.6,557.2 887.6,525.2 888.4,523.4 888.4,557.2 889.3,557.2 889.3,526.6 890.1,521.0 890.1,557.2 890.9,557.2 890.9,521.1 891.8,522.7 891.8,557.2 892.6,557.2 892.6,524.5 893.4,522.3 893.4,557.2 894.3,557.2 894.3,521.4 895.1,522.5 895.1,557.2 895.9,557.2 895.9,522.0 896.8,521.5 896.8,557.2 897.6,557.2 897.6,524.8 898.4,522.8 898.4,557.2 899.2,557.2 899.2,524.6 900.1,525.8 900.1,557.2 900.9,557.2 900.9,521.2 901.7,527.4 901.7,557.2 902.6,557.2 902.6,522.4 903.4,521.8 903.4,557.2 904.2,557.2 904.2,524.7 905.0,525.2 905.0,557.2 905.9,557.2 905.9,522.6 906.7,521.3 906.7,557.2 907.5,557.2 907.5,523.7 908.4,524.1 908.4,557.2 909.2,557.2 909.2,524.6 910.0,523.2 910.0,557.2 910.9,557.2 910.9,525.4 911.7,523.9 911.7,557.2 912.5,557.2 912.5,523.5 913.3,524.4 913.3,557.2 914.2,557.2 914.2,524.5 915.0,524.0 915.0,557.2 915.8,557.2 915.8,524.2 916.7,523.6 916.7,557.2 917.5,557.2 917.5,523.4 918.3,524.2 918.3,557.2 919.2,557.2 919.2,524.1 920.0,526.4 920.0,557.2 920.8,557.2 920.8,523.8 921.6,523.1 921.6,557.2 922.5,557.2 922.5,522.1 923.3,524.3 923.3,557.2 924.1,557.2 924.1,520.5 925.0,522.9 925.0,557.2 925.8,557.2 925.8,523.2 926.6,525.2 926.6,557.2 927.5,557.2 927.5,521.1 928.3,524.6 928.3,557.2 929.1,557.2 929.1,525.9 929.9,524.5 929.9,557.2 930.8,557.2 930.8,522.3 931.6,523.1 931.6,557.2 932.4,557.2 932.4,523.3 933.3,526.4 933.3,557.2 934.1,557.2 934.1,523.1 934.9,522.9 934.9,557.2 935.8,557.2 935.8,521.9 936.6,525.2 936.6,557.2 937.4,557.2 937.4,523.5 938.2,522.3 938.2,557.2 939.1,557.2 939.1,523.9 939.9,521.5 939.9,557.2 940.7,557.2 940.7,524.6 941.6,525.4 941.6,557.2 942.4,557.2 942.4,521.3 943.2,526.2 943.2,557.2 944.1,557.2 944.1,522.2 944.9,523.3 944.9,557.2 945.7,557.2 945.7,521.7 946.5,522.1 946.5,557.2 947.4,557.2 947.4,525.2 948.2,523.7 948.2,557.2 949.0,557.2 949.0,522.9 949.9,523.2 949.9,557.2 950.7,557.2 950.7,521.9 951.5,522.8 951.5,557.2 952.4,557.2 952.4,521.4 953.2,524.2 953.2,557.2 954.0,557.2 954.0,523.0 954.8,521.5 954.8,557.2 955.7,557.2 955.7,522.6 956.5,523.9 956.5,557.2 957.3,557.2 957.3,522.0 958.2,522.9 958.2,557.2 959.0,557.2 959.0,524.5 959.8,524.9 959.8,557.2 960.7,557.2 960.7,515.8 961.5,520.8 961.5,557.2 962.3,557.2 962.3,523.9 963.1,519.9 963.1,557.2 964.0,557.2 964.0,522.8 964.8,523.1 964.8,557.2 965.6,557.2 965.6,523.8 966.5,522.1 966.5,557.2 967.3,557.2 967.3,518.9 968.1,523.4 968.1,557.2 969.0,557.2 969.0,521.3 969.8,522.2 969.8,557.2 970.6,557.2 970.6,519.6 971.4,523.1 971.4,557.2 972.3,557.2 972.3,521.6 973.1,522.1 973.1,557.2 973.9,557.2 973.9,522.6 974.8,519.9 974.8,557.2 975.6,557.2 975.6,523.3 976.4,520.1 976.4,557.2 977.3,557.2 977.3,521.4" fill="none" stroke="#4462a8" stroke-width="1" stroke-linejoin="round"/><polyline stroke-opacity="0.86" points="552.3,531.7 553.6,523.4 554.8,525.3 556.1,523.1 557.3,528.4 558.4,535.4 559.6,534.4 560.7,528.1 561.9,521.5 563.0,518.0 564.0,520.0 565.1,529.8 566.1,521.6 567.2,513.1 568.2,514.5 569.2,538.0 570.1,531.9 571.1,523.2 572.0,525.0 573.0,518.8 573.9,519.1 574.8,532.9 575.7,526.5 576.6,527.4 577.4,533.0 578.3,523.8 579.1,524.0 580.0,528.5 580.8,530.6 581.6,545.2 582.4,527.1 583.2,515.9 583.9,524.3 584.7,521.5 585.5,522.5 586.2,528.7 587.0,531.3 587.7,520.3 588.4,529.2 589.1,536.3 589.8,522.2 590.5,516.8 591.2,527.9 591.9,525.7 592.6,527.0 593.3,526.7 593.9,528.3 594.6,530.8 595.2,520.9 595.9,515.8 596.5,522.1 597.1,520.9 597.7,531.0 598.4,525.2 599.0,531.8 599.6,519.2 600.2,529.8 600.8,520.9 601.3,521.6 601.9,518.5 602.5,517.2 603.1,526.4 603.6,525.3 604.2,518.0 604.7,519.9 605.3,529.7 605.8,517.7 606.4,527.2 606.9,525.1 607.4,522.8 608.0,525.8 608.5,512.1 609.0,514.7 609.5,522.8 610.0,526.0 610.5,523.4 611.0,526.3 611.5,521.3 612.0,529.4 612.5,526.3 613.0,549.6 613.5,537.7 614.0,523.5 614.4,527.9 614.9,548.6 615.4,532.5 615.8,536.2 616.3,532.9 616.7,520.8 617.2,529.9 617.6,538.1 618.1,524.8 618.5,531.1 619.0,531.1 619.4,526.0 619.8,526.1 620.3,526.4 620.7,528.2 621.1,523.5 621.5,519.3 622.0,519.5 622.4,521.3 622.8,533.2 623.2,533.8 623.6,527.5 624.0,536.5 624.4,530.1 624.8,525.5 625.2,518.9 625.6,530.6 626.0,529.9 626.4,532.0 626.8,542.5 627.2,527.3 627.5,526.9 627.9,529.8 628.3,528.5 628.7,550.0 629.0,531.2 629.4,523.9 629.8,522.7 630.1,536.8 630.5,522.7 630.9,526.0 631.2,522.0 631.6,528.5 631.9,536.7 632.3,531.2 632.7,519.8 633.0,522.2 633.3,528.7 633.7,525.2 634.0,525.6 634.4,527.1 634.7,548.8 635.1,530.9 635.4,530.4 635.7,521.3 636.1,520.2 636.4,523.7 636.7,522.7 637.0,525.9 637.4,540.1 637.7,522.3 638.0,518.4 638.3,519.5 638.7,536.0 639.0,528.0 639.3,542.6 639.6,523.9 639.9,526.5 640.2,527.7 640.5,544.9 640.8,530.3 641.2,528.6 641.5,521.3 641.8,541.2 642.1,536.0 642.4,532.4 642.7,524.5 643.0,531.7 643.3,527.0 643.5,531.2 643.8,535.8 644.1,538.1 644.4,532.5 644.7,529.2 645.0,528.3 645.3,539.2 645.6,534.0 645.9,544.0 646.1,533.9 646.4,526.5 646.7,529.1 647.0,537.0 647.3,538.9 647.8,525.2 647.8,536.0 648.6,531.4 648.6,526.0 649.4,525.0 649.4,531.1 650.2,532.5 650.2,520.5 651.1,528.5 651.1,543.7 651.9,549.9 651.9,525.9 652.7,517.2 652.7,540.2 653.6,531.0 653.6,529.8 654.4,517.7 654.4,532.2 655.2,541.6 655.2,528.7 656.0,532.3 656.0,545.3 656.9,545.7 656.9,525.5 657.7,524.7 657.7,535.7 658.5,537.3 658.5,533.3 659.4,521.6 659.4,531.6 660.2,526.9 660.2,515.8 661.0,521.3 661.0,546.9 661.9,542.4 661.9,527.9 662.7,537.8 662.7,543.4 663.5,543.4 663.5,529.7 664.3,527.3 664.3,544.9 665.2,546.6 665.2,533.4 666.0,519.9 666.0,526.1 666.8,541.0 666.8,524.9 667.7,528.3 667.7,543.3 668.5,532.4 668.5,526.8 669.3,523.7 669.3,556.4 670.2,539.1 670.2,529.2 671.0,530.0 671.0,534.3 671.8,533.0 671.8,523.2 672.6,530.0 672.6,544.7 673.5,546.4 673.5,528.4 674.3,533.6 674.3,550.1 675.1,537.9 675.1,520.0 676.0,518.4 676.0,532.8 676.8,557.2 676.8,510.3 677.6,524.7 677.6,542.6 678.5,530.2 678.5,514.8 679.3,527.8 679.3,534.2 680.1,550.6 680.1,536.9 680.9,524.3 680.9,539.3 681.8,546.1 681.8,533.0 682.6,525.7 682.6,541.4 683.4,545.5 683.4,530.8 684.3,522.0 684.3,537.5 685.1,534.9 685.1,521.6 685.9,521.4 685.9,542.9 686.8,547.2 686.8,530.0 687.6,517.2 687.6,538.3 688.4,553.0 688.4,525.4 689.2,520.0 689.2,544.0 690.1,539.6 690.1,525.9 690.9,530.4 690.9,542.7 691.7,541.7 691.7,523.6 692.6,524.2 692.6,544.0 693.4,550.9 693.4,534.0 694.2,521.2 694.2,544.9 695.1,548.0 695.1,526.5 695.9,522.7 695.9,557.2 696.7,555.8 696.7,538.4 697.5,528.3 697.5,547.4 698.4,550.5 698.4,509.3 699.2,495.6 699.2,544.2 700.0,542.3 700.0,527.5 700.9,525.0 700.9,557.2 701.7,556.9 701.7,523.0 702.5,535.7 702.5,556.0 703.4,552.0 703.4,527.8 704.2,531.4 704.2,551.3 705.0,545.5 705.0,529.0 705.8,524.6 705.8,546.0 706.7,554.5 706.7,535.6 707.5,524.5 707.5,539.4 708.3,545.4 708.3,530.7 709.2,530.1 709.2,545.2 710.0,555.2 710.0,529.4 710.8,530.0 710.8,548.2 711.7,544.1 711.7,528.5 712.5,528.2 712.5,555.4 713.3,555.4 713.3,530.5 714.1,526.7 714.1,553.5 715.0,557.2 715.0,530.6 715.8,525.9 715.8,555.6 716.6,551.4 716.6,527.0 717.5,521.2 717.5,547.4 718.3,557.2 718.3,526.7 719.1,531.6 719.1,555.4 720.0,557.2 720.0,528.7 720.8,525.7 720.8,552.1 721.6,541.7 721.6,523.5 722.4,528.0 722.4,553.9 723.3,550.7 723.3,525.1 724.1,527.6 724.1,548.0 724.9,557.2 724.9,521.6 725.8,520.6 725.8,547.3 726.6,550.2 726.6,524.7 727.4,526.3 727.4,551.4 728.3,541.3 728.3,530.7 729.1,523.7 729.1,557.2 729.9,552.7 729.9,530.9 730.8,520.8 730.8,557.2 731.6,557.2 731.6,533.7 732.4,531.3 732.4,557.2 733.2,557.2 733.2,532.1 734.1,529.5 734.1,556.0 734.9,557.2 734.9,528.1 735.7,522.2 735.7,557.2 736.6,552.9 736.6,529.1 737.4,524.7 737.4,557.2 738.2,557.2 738.2,527.0 739.0,523.1 739.0,549.9 739.9,557.0 739.9,526.0 740.7,525.7 740.7,552.6 741.5,557.2 741.5,501.9 742.4,529.4 742.4,557.2 743.2,557.2 743.2,521.1 744.0,528.3 744.0,550.1 744.9,557.2 744.9,529.6 745.7,530.8 745.7,557.2 746.5,557.2 746.5,532.0 747.3,524.1 747.3,557.2 748.2,557.2 748.2,518.4 749.0,524.2 749.0,552.4 749.8,554.7 749.8,527.5 750.7,523.7 750.7,555.8 751.5,557.2 751.5,528.6 752.3,525.6 752.3,557.2 753.2,557.2 753.2,532.4 754.0,534.5 754.0,557.2 754.8,557.2 754.8,530.5 755.6,531.4 755.6,557.2 756.5,556.0 756.5,528.9 757.3,524.2 757.3,557.2 758.1,557.2 758.1,529.0 759.0,523.5 759.0,552.0 759.8,557.2 759.8,519.7 760.6,524.9 760.6,557.2 761.5,557.2 761.5,524.6 762.3,525.7 762.3,557.2 763.1,555.9 763.1,527.1 763.9,527.9 763.9,555.9 764.8,557.2 764.8,529.6 765.6,529.9 765.6,557.2 766.4,557.2 766.4,500.0 767.3,525.8 767.3,557.2 768.1,549.4 768.1,526.8 768.9,524.5 768.9,557.2 769.8,557.2 769.8,527.0 770.6,526.6 770.6,554.4 771.4,551.0 771.4,523.4 772.2,525.9 772.2,557.2 773.1,557.2 773.1,531.3 773.9,523.8 773.9,557.2 774.7,557.2 774.7,526.9 775.6,527.3 775.6,557.2 776.4,557.2 776.4,526.8 777.2,529.0 777.2,557.2 778.1,557.2 778.1,527.2 778.9,525.4 778.9,557.1 779.7,557.2 779.7,524.8 780.5,528.0 780.5,557.2 781.4,557.2 781.4,525.2 782.2,527.2 782.2,557.2 783.0,557.2 783.0,529.8 783.9,528.2 783.9,557.2 784.7,557.2 784.7,509.9 785.5,526.0 785.5,557.2 786.4,557.2 786.4,524.9" fill="none" stroke="#ad2634" stroke-width="0.82" stroke-linejoin="round"/><polyline stroke-opacity="0.86" points="786.4,557.2 786.4,524.9 787.2,527.8 787.2,557.2 788.0,557.2 788.0,521.3 788.8,525.4 788.8,557.2 789.7,557.2 789.7,526.8 790.5,524.3 790.5,554.2 791.3,557.2 791.3,525.3 792.2,526.6 792.2,557.2 793.0,557.2 793.0,495.6 793.8,529.5 793.8,557.2 794.7,557.2 794.7,526.8 795.5,528.7 795.5,557.2 796.3,557.2 796.3,527.9 797.1,525.2 797.1,557.2 798.0,557.2 798.0,527.8 798.8,511.3 798.8,557.2 799.6,557.2 799.6,527.0 800.5,522.2 800.5,557.2 801.3,557.2 801.3,524.9 802.1,525.1 802.1,557.2 803.0,557.2 803.0,524.8 803.8,522.6 803.8,557.2 804.6,557.2 804.6,527.6 805.4,523.8 805.4,557.2 806.3,557.2 806.3,529.4 807.1,523.8 807.1,557.2 807.9,557.2 807.9,527.3 808.8,527.8 808.8,557.2 809.6,557.2 809.6,527.5 810.4,526.1 810.4,557.2 811.3,557.2 811.3,519.6 812.1,526.7 812.1,557.2 812.9,557.2 812.9,520.6 813.8,527.2 813.8,557.2 814.6,557.2 814.6,529.2 815.4,528.7 815.4,557.2 816.2,557.2 816.2,530.7 817.1,522.9 817.1,557.2 817.9,557.2 817.9,523.2 818.7,522.5 818.7,557.2 819.6,557.2 819.6,522.4 820.4,530.2 820.4,557.2 821.2,557.2 821.2,528.3 822.0,523.9 822.0,557.2 822.9,557.2 822.9,527.7 823.7,520.8 823.7,557.2 824.5,557.2 824.5,525.8 825.4,523.6 825.4,557.2 826.2,557.2 826.2,527.0 827.0,524.3 827.0,557.2 827.9,557.2 827.9,524.0 828.7,524.3 828.7,557.2 829.5,557.2 829.5,528.9 830.3,524.0 830.3,557.2 831.2,557.2 831.2,531.4 832.0,527.3 832.0,557.2 832.8,557.2 832.8,523.2 833.7,524.5 833.7,557.2 834.5,557.2 834.5,526.8 835.3,525.7 835.3,557.2 836.2,557.2 836.2,512.3 837.0,527.6 837.0,557.2 837.8,557.2 837.8,527.4 838.6,528.7 838.6,557.2 839.5,557.2 839.5,525.7 840.3,527.9 840.3,557.2 841.1,557.2 841.1,524.1 842.0,525.8 842.0,557.2 842.8,557.2 842.8,529.4 843.6,525.6 843.6,557.2 844.5,557.2 844.5,524.6 845.3,523.5 845.3,557.2 846.1,557.2 846.1,520.0 846.9,524.4 846.9,557.2 847.8,557.2 847.8,523.1 848.6,520.9 848.6,557.2 849.4,557.2 849.4,528.9 850.3,527.5 850.3,557.2 851.1,557.2 851.1,524.8 851.9,525.7 851.9,557.2 852.8,557.2 852.8,525.5 853.6,525.3 853.6,557.2 854.4,557.2 854.4,528.1 855.2,524.9 855.2,557.2 856.1,557.2 856.1,528.1 856.9,520.8 856.9,557.2 857.7,557.2 857.7,525.0 858.6,523.2 858.6,557.2 859.4,557.2 859.4,525.9 860.2,524.2 860.2,557.2 861.1,557.2 861.1,522.0 861.9,524.1 861.9,557.2 862.7,557.2 862.7,524.5 863.5,525.2 863.5,557.2 864.4,557.2 864.4,526.0 865.2,523.3 865.2,557.2 866.0,557.2 866.0,524.5 866.9,526.2 866.9,557.2 867.7,557.2 867.7,522.7 868.5,523.9 868.5,557.2 869.4,557.2 869.4,523.2 870.2,512.3 870.2,557.2 871.0,557.2 871.0,528.7 871.8,525.7 871.8,557.2 872.7,557.2 872.7,522.3 873.5,523.8 873.5,557.2 874.3,557.2 874.3,527.9 875.2,527.3 875.2,557.2 876.0,557.2 876.0,521.8 876.8,524.5 876.8,557.2 877.7,557.2 877.7,523.5 878.5,524.5 878.5,557.2 879.3,557.2 879.3,521.2 880.1,528.1 880.1,557.2 881.0,557.2 881.0,526.2 881.8,524.7 881.8,557.2 882.6,557.2 882.6,523.5 883.5,522.1 883.5,557.2 884.3,557.2 884.3,525.1 885.1,525.9 885.1,557.2 886.0,557.2 886.0,525.5 886.8,517.9 886.8,557.2 887.6,557.2 887.6,525.9 888.4,524.1 888.4,557.2 889.3,557.2 889.3,524.3 890.1,523.7 890.1,557.2 890.9,557.2 890.9,526.8 891.8,526.0 891.8,557.2 892.6,557.2 892.6,525.9 893.4,524.0 893.4,557.2 894.3,557.2 894.3,523.8 895.1,523.6 895.1,557.2 895.9,557.2 895.9,524.2 896.8,525.4 896.8,557.2 897.6,557.2 897.6,524.9 898.4,525.6 898.4,557.2 899.2,557.2 899.2,523.1 900.1,525.5 900.1,557.2 900.9,557.2 900.9,522.7 901.7,523.0 901.7,557.2 902.6,557.2 902.6,521.8 903.4,524.8 903.4,557.2 904.2,557.2 904.2,524.9 905.0,524.4 905.0,557.2 905.9,557.2 905.9,521.8 906.7,525.7 906.7,557.2 907.5,557.2 907.5,524.0 908.4,525.7 908.4,557.2 909.2,557.2 909.2,522.9 910.0,522.9 910.0,557.2 910.9,557.2 910.9,524.7 911.7,520.0 911.7,557.2 912.5,557.2 912.5,510.5 913.3,521.6 913.3,557.2 914.2,557.2 914.2,524.9 915.0,524.8 915.0,557.2 915.8,557.2 915.8,522.0 916.7,525.1 916.7,557.2 917.5,557.2 917.5,522.6 918.3,522.8 918.3,557.2 919.2,557.2 919.2,524.7 920.0,525.6 920.0,557.2 920.8,557.2 920.8,523.8 921.6,525.8 921.6,557.2 922.5,557.2 922.5,521.9 923.3,519.7 923.3,557.2 924.1,557.2 924.1,522.9 925.0,523.9 925.0,557.2 925.8,557.2 925.8,522.9 926.6,522.7 926.6,557.2 927.5,557.2 927.5,524.2 928.3,524.8 928.3,557.2 929.1,557.2 929.1,521.7 929.9,522.8 929.9,557.2 930.8,557.2 930.8,522.9 931.6,523.5 931.6,557.2 932.4,557.2 932.4,522.8 933.3,518.7 933.3,557.2 934.1,557.2 934.1,523.0 934.9,522.2 934.9,557.2 935.8,557.2 935.8,523.4 936.6,524.6 936.6,557.2 937.4,557.2 937.4,525.3 938.2,523.6 938.2,557.2 939.1,557.2 939.1,523.4 939.9,523.9 939.9,557.2 940.7,557.2 940.7,525.7 941.6,524.7 941.6,557.2 942.4,557.2 942.4,525.5 943.2,523.4 943.2,557.2 944.1,557.2 944.1,523.3 944.9,520.8 944.9,557.2 945.7,557.2 945.7,524.0 946.5,525.2 946.5,557.2 947.4,557.2 947.4,523.0 948.2,525.9 948.2,557.2 949.0,557.2 949.0,522.2 949.9,522.8 949.9,557.2 950.7,557.2 950.7,524.5 951.5,523.2 951.5,557.2 952.4,557.2 952.4,521.9 953.2,521.7 953.2,557.2 954.0,557.2 954.0,523.3 954.8,523.1 954.8,557.2 955.7,557.2 955.7,520.2 956.5,522.1 956.5,557.2 957.3,557.2 957.3,521.8 958.2,522.7 958.2,557.2 959.0,557.2 959.0,526.5 959.8,524.6 959.8,557.2 960.7,557.2 960.7,522.3 961.5,523.5 961.5,557.2 962.3,557.2 962.3,523.4 963.1,519.2 963.1,557.2 964.0,557.2 964.0,522.3 964.8,523.7 964.8,557.2 965.6,557.2 965.6,524.6 966.5,524.6 966.5,557.2 967.3,557.2 967.3,523.9 968.1,522.8 968.1,557.2 969.0,557.2 969.0,522.5 969.8,523.3 969.8,557.2 970.6,557.2 970.6,520.2 971.4,522.8 971.4,557.2 972.3,557.2 972.3,523.3 973.1,522.2 973.1,557.2 973.9,557.2 973.9,520.6 974.8,523.2 974.8,557.2 975.6,557.2 975.6,525.0 976.4,523.0 976.4,557.2 977.3,557.2 977.3,525.8" fill="none" stroke="#ad2634" stroke-width="1" stroke-linejoin="round"/><path d="M793.16,277.08 V515.20" stroke="#6a62a0" stroke-width="2.1" stroke-opacity="0.55"/><path d="M793.16,277.08 V515.20" stroke="#ae3641" stroke-width="1.7"/></g><path d="M552.30,191.00 V554.40 H977.60 V191.00" fill="none" stroke="#757575" stroke-width="1.3"/><path d="M551.70,191.00 H978.20" fill="none" stroke="#9e9e9e" stroke-width="2"/></svg>
<div class="t" style="left:543.05px;top:196.10px;font-size:11.5px;line-height:12.00px;color:#3e3e3e;transform:scaleX(0.9300);">0</div>
<div class="t" style="left:533.54px;top:215.65px;font-size:11.5px;line-height:12.00px;color:#3e3e3e;transform:scaleX(0.9300);">-10</div>
<div class="t" style="left:533.54px;top:235.20px;font-size:11.5px;line-height:12.00px;color:#3e3e3e;transform:scaleX(0.9300);">-20</div>
<div class="t" style="left:533.54px;top:254.75px;font-size:11.5px;line-height:12.00px;color:#3e3e3e;transform:scaleX(0.9300);">-30</div>
<div class="t" style="left:533.54px;top:274.30px;font-size:11.5px;line-height:12.00px;color:#3e3e3e;transform:scaleX(0.9300);">-40</div>
<div class="t" style="left:533.54px;top:293.85px;font-size:11.5px;line-height:12.00px;color:#3e3e3e;transform:scaleX(0.9300);">-50</div>
<div class="t" style="left:533.54px;top:313.40px;font-size:11.5px;line-height:12.00px;color:#3e3e3e;transform:scaleX(0.9300);">-60</div>
<div class="t" style="left:533.54px;top:332.95px;font-size:11.5px;line-height:12.00px;color:#3e3e3e;transform:scaleX(0.9300);">-70</div>
<div class="t" style="left:533.54px;top:352.50px;font-size:11.5px;line-height:12.00px;color:#3e3e3e;transform:scaleX(0.9300);">-80</div>
<div class="t" style="left:533.54px;top:372.05px;font-size:11.5px;line-height:12.00px;color:#3e3e3e;transform:scaleX(0.9300);">-90</div>
<div class="t" style="left:527.59px;top:391.60px;font-size:11.5px;line-height:12.00px;color:#3e3e3e;transform:scaleX(0.9300);">-100</div>
<div class="t" style="left:528.39px;top:411.15px;font-size:11.5px;line-height:12.00px;color:#3e3e3e;transform:scaleX(0.9300);">-110</div>
<div class="t" style="left:527.59px;top:430.70px;font-size:11.5px;line-height:12.00px;color:#3e3e3e;transform:scaleX(0.9300);">-120</div>
<div class="t" style="left:527.59px;top:450.25px;font-size:11.5px;line-height:12.00px;color:#3e3e3e;transform:scaleX(0.9300);">-130</div>
<div class="t" style="left:527.59px;top:469.80px;font-size:11.5px;line-height:12.00px;color:#3e3e3e;transform:scaleX(0.9300);">-140</div>
<div class="t" style="left:527.59px;top:489.35px;font-size:11.5px;line-height:12.00px;color:#3e3e3e;transform:scaleX(0.9300);">-150</div>
<div class="t" style="left:527.59px;top:508.90px;font-size:11.5px;line-height:12.00px;color:#3e3e3e;transform:scaleX(0.9300);">-160</div>
<div class="t" style="left:527.59px;top:528.45px;font-size:11.5px;line-height:12.00px;color:#3e3e3e;transform:scaleX(0.9300);">-170</div>
<div class="t" style="left:527.59px;top:548.00px;font-size:11.5px;line-height:12.00px;color:#3e3e3e;transform:scaleX(0.9300);">-180</div>
<div class="t" style="left:546.35px;top:557.30px;font-size:11.5px;line-height:12.00px;color:#3e3e3e;transform:scaleX(0.9300);">20</div>
<div class="t" style="left:571.32px;top:557.30px;font-size:11.5px;line-height:12.00px;color:#3e3e3e;transform:scaleX(0.9300);">30</div>
<div class="t" style="left:602.77px;top:557.30px;font-size:11.5px;line-height:12.00px;color:#3e3e3e;transform:scaleX(0.9300);">50</div>
<div class="t" style="left:642.47px;top:557.30px;font-size:11.5px;line-height:12.00px;color:#3e3e3e;transform:scaleX(0.9300);">100</div>
<div class="t" style="left:685.14px;top:557.30px;font-size:11.5px;line-height:12.00px;color:#3e3e3e;transform:scaleX(0.9300);">200</div>
<div class="t" style="left:710.11px;top:557.30px;font-size:11.5px;line-height:12.00px;color:#3e3e3e;transform:scaleX(0.9300);">300</div>
<div class="t" style="left:741.56px;top:557.30px;font-size:11.5px;line-height:12.00px;color:#3e3e3e;transform:scaleX(0.9300);">500</div>
<div class="t" style="left:787.51px;top:557.30px;font-size:11.5px;line-height:12.00px;color:#3e3e3e;transform:scaleX(0.9300);">1k</div>
<div class="t" style="left:830.19px;top:557.30px;font-size:11.5px;line-height:12.00px;color:#3e3e3e;transform:scaleX(0.9300);">2k</div>
<div class="t" style="left:855.15px;top:557.30px;font-size:11.5px;line-height:12.00px;color:#3e3e3e;transform:scaleX(0.9300);">3k</div>
<div class="t" style="left:886.60px;top:557.30px;font-size:11.5px;line-height:12.00px;color:#3e3e3e;transform:scaleX(0.9300);">5k</div>
<div class="t" style="left:926.30px;top:557.30px;font-size:11.5px;line-height:12.00px;color:#3e3e3e;transform:scaleX(0.9300);">10k</div>
<div class="t" style="left:968.98px;top:557.30px;font-size:11.5px;line-height:12.00px;color:#3e3e3e;transform:scaleX(0.9300);">20k</div>
<div class="t" style="left:730.00px;top:567.30px;font-size:11.5px;line-height:12.00px;color:#3e3e3e;transform:scaleX(0.8581);">Frequency (Hz)</div>
<div class="t" style="left:756.75px;top:179.00px;font-size:9.5px;line-height:11.00px;color:#1a1a1a;font-weight:bold;font-family:'Liberation Serif',serif;transform:scaleX(0.7509);letter-spacing:0.9px;">FFT</div>
<div class="t" style="left:420.3px;top:365.5px;font-size:11.5px;line-height:13px;color:#3e3e3e;width:200px;text-align:center;transform:rotate(-90deg) scaleX(0.8527);transform-origin:50% 50%">Level (dBrA)</div>
<div class="b" style="left:0px;top:588px;width:1000px;height:6.1px;background:#477583;"></div>
<div class="b" style="left:500px;top:590px;width:2px;height:2px;background:#c8d8dd;"></div>
<div class="b" style="left:504px;top:590px;width:2px;height:2px;background:#c8d8dd;"></div>
<div class="b" style="left:508px;top:590px;width:2px;height:2px;background:#c8d8dd;"></div>
<div class="b" style="left:5px;top:594px;width:995px;height:23px;background:#d4d4d4;"></div>
<div class="b" style="left:5px;top:617px;width:995px;height:281px;background:#a9a9a9;"></div>
<svg class="b" style="left:7.2px;top:598px;" width="13" height="13.2" viewBox="0 0 13 13.2"><rect width="13" height="13.2" fill="#2d4a5c"/><path d="M6.5,2 V11.2 M2,6.6 H11" stroke="#fff" stroke-width="1.6"/></svg>
<div class="t" style="left:23.00px;top:597.50px;font-size:11.5px;line-height:12.00px;color:#222;transform:scaleX(1.0273);">Add Meter</div>
<svg class="b" style="left:82px;top:603.7px;" width="6" height="4" viewBox="0 0 6 4"><path d="M0.2,0 H4.8 L2.5,2.6 Z" fill="#222"/></svg>
<div class="b" style="left:92px;top:597px;width:1px;height:16px;background:#efefef;"></div>
<svg class="b" style="left:97px;top:598px;" width="14" height="13" viewBox="0 0 14 13"><rect width="14" height="13" fill="#2d4a5c"/><ellipse cx="5" cy="3" rx="3.2" ry="1.3" fill="#fff"/><path d="M1.8,4.5 V10 A3.2,1.3 0 0 0 8.2,10 V4.5 A3.2,1.3 0 0 1 1.8,4.5" fill="#fff"/><path d="M1.8,6.3 A3.2,1.3 0 0 0 8.2,6.3 M1.8,8.2 A3.2,1.3 0 0 0 8.2,8.2" stroke="#2d4a5c" stroke-width="0.7" fill="none"/><path d="M7,6 H10 V4 L13,6.8 L10,9.6 V7.6 H7 Z" fill="#fff" stroke="#2d4a5c" stroke-width="0.5"/></svg>
<div class="t" style="left:113.70px;top:597.50px;font-size:11.5px;line-height:12.00px;color:#222;transform:scaleX(0.9561);">Save Meter Data</div>
<div class="b" style="left:203px;top:597px;width:1px;height:16px;background:#efefef;"></div>
<svg class="b" style="left:209px;top:598px;" width="13.2" height="13.2" viewBox="0 0 13.2 13.2"><rect width="13.2" height="13.2" fill="#2d4a5c"/><path d="M4,2.3 L10.2,6.6 L4,10.9 Z" fill="#fff"/></svg>
<div class="t" style="left:225.40px;top:597.50px;font-size:11.5px;line-height:12.00px;color:#222;transform:scaleX(0.9406);">Regulate</div>
<svg class="b" style="left:989px;top:600px;" width="11" height="10" viewBox="0 0 11 10"><path d="M6.5,0.5 L9,3.5 H7.5 V5 H5.5 V3.5 H4 Z" fill="#4a4a8a" transform="rotate(180 6.5 3)"/><path d="M2,8 H11" stroke="#4a4a8a" stroke-width="1.3"/></svg>
<div class="b" style="left:8px;top:618px;width:485px;height:21px;background:#dbe5e8;"></div>
<div class="b" style="left:8px;top:639px;width:485px;height:1px;background:#b5bcbf;"></div>
<div class="b" style="left:8px;top:640px;width:485px;height:112px;background:#dbe5e8;"></div>
<div class="t" style="left:11.00px;top:621.20px;font-size:13.5px;line-height:15.00px;color:#000;font-weight:bold;transform:scaleX(0.9667);">RMS Level</div>
<div class="b" style="left:83px;top:618px;width:64px;height:21px;background:#fff;"></div>
<div class="t" style="left:87.00px;top:622.50px;font-size:11px;line-height:12.00px;color:#222;">dBrA</div>
<svg class="b" style="left:140px;top:627.7px;" width="6" height="4" viewBox="0 0 6 4"><path d="M0.2,0 H4.8 L2.5,2.6 Z" fill="#222"/></svg>
<svg class="b" style="left:150.1px;top:622px;" width="13.3" height="12.8" viewBox="0 0 13.3 12.8"><rect width="13.3" height="12.8" fill="#1f3f58"/><rect x="1" y="2.3" width="11.3" height="8.3" fill="#fff"/><rect x="1" y="3.6" width="11.3" height="5.7" fill="#566f90"/><path d="M1.6,8.6 L5,5.6 L7.8,8.2 L12,4.2" stroke="#fff" stroke-width="0.9" fill="none"/></svg>
<svg class="b" style="left:165.2px;top:627.7px;" width="6" height="4" viewBox="0 0 6 4"><path d="M0.2,0 H4.8 L2.5,2.6 Z" fill="#111"/></svg>
<svg class="b" style="left:176px;top:622px;" width="13" height="13" viewBox="0 0 13 13"><rect width="13" height="13" fill="#2d4a5c"/><rect x="5.4" y="1.6" width="2.2" height="2.6" fill="#fff" transform="rotate(0 6.5 6.5)"/><rect x="5.4" y="1.6" width="2.2" height="2.6" fill="#fff" transform="rotate(45 6.5 6.5)"/><rect x="5.4" y="1.6" width="2.2" height="2.6" fill="#fff" transform="rotate(90 6.5 6.5)"/><rect x="5.4" y="1.6" width="2.2" height="2.6" fill="#fff" transform="rotate(135 6.5 6.5)"/><rect x="5.4" y="1.6" width="2.2" height="2.6" fill="#fff" transform="rotate(180 6.5 6.5)"/><rect x="5.4" y="1.6" width="2.2" height="2.6" fill="#fff" transform="rotate(225 6.5 6.5)"/><rect x="5.4" y="1.6" width="2.2" height="2.6" fill="#fff" transform="rotate(270 6.5 6.5)"/><rect x="5.4" y="1.6" width="2.2" height="2.6" fill="#fff" transform="rotate(315 6.5 6.5)"/><circle cx="6.5" cy="6.5" r="3.3" fill="#fff"/><circle cx="6.5" cy="6.5" r="1.5" fill="#2d4a5c"/></svg>
<div class="b" style="left:450.5px;top:621px;width:1.5px;height:16px;background:#e8eef0;"></div>
<svg class="b" style="left:457px;top:623px;" width="10.3" height="10.6" viewBox="0 0 10.3 10.6"><path transform="scale(0.936 0.964)" d="M4,1.1 H1.1 V9.7 H9.9 V6.9" stroke="#1b4e9a" stroke-width="1.9" fill="none"/><path transform="scale(0.936 0.964)" d="M5,6 L8.6,2.4" stroke="#1b4e9a" stroke-width="1.8"/><path transform="scale(0.936 0.964)" d="M5.6,0.2 H10.8 V5.4 Z" fill="#1b4e9a"/></svg>
<svg class="b" style="left:477px;top:623.6px;" width="10" height="10" viewBox="0 0 10 10"><path d="M1,1 L8.8,8.8 M8.8,1 L1,8.8" stroke="#1c3248" stroke-width="2"/></svg>
<div class="b" style="left:132px;top:644px;width:353px;height:34px;background:#000;"></div>
<div class="b" style="left:132px;top:678px;width:353px;height:17px;background:#808080;border:1px solid #cbcbcb;box-sizing:border-box;"></div>
<div class="b" style="left:9px;top:695.5px;width:477px;height:1px;background:#8f9699;"></div>
<div class="b" style="left:132px;top:697px;width:353px;height:17px;background:#808080;border:1px solid #cbcbcb;box-sizing:border-box;"></div>
<div class="b" style="left:132px;top:714px;width:353px;height:35px;background:#000;"></div>
<div class="b" style="left:133px;top:679px;width:154px;height:14.6px;background:#00f000;"></div>
<div class="b" style="left:133px;top:685.5px;width:293px;height:2px;background:#000;"></div>
<div class="b" style="left:133px;top:698px;width:154px;height:14.6px;background:#00f000;"></div>
<div class="b" style="left:133px;top:704.5px;width:293px;height:2px;background:#000;"></div>
<div class="t" style="left:13.00px;top:656.00px;font-size:25px;line-height:28.00px;color:#0a0a0a;transform:scaleX(1.0357);-webkit-text-stroke:0.3px #dbe5e8;">Ch1</div>
<div class="t" style="left:13.00px;top:710.00px;font-size:25px;line-height:28.00px;color:#0a0a0a;transform:scaleX(1.0466);-webkit-text-stroke:0.3px #dbe5e8;">Ch2</div>
<svg class="b" style="left:121px;top:665px;" width="9" height="8" viewBox="0 0 9 8"><path d="M0,0 H9 L4.5,8 Z" fill="#000"/></svg>
<svg class="b" style="left:121px;top:719px;" width="9" height="8" viewBox="0 0 9 8"><path d="M0,0 H9 L4.5,8 Z" fill="#000"/></svg>
<div class="t" style="left:301.00px;top:647.50px;font-size:27px;line-height:30.00px;color:#14ee20;transform:scaleX(0.9609);-webkit-text-stroke:0.3px #14ee20;">-38.193</div>
<div class="t" style="left:301.00px;top:716.50px;font-size:27px;line-height:30.00px;color:#14ee20;transform:scaleX(0.9609);-webkit-text-stroke:0.3px #14ee20;">-38.207</div>
<div class="t" style="left:423.00px;top:647.50px;font-size:27px;line-height:30.00px;color:#14ee20;transform:scaleX(0.9496);-webkit-text-stroke:0.3px #14ee20;">dBrA</div>
<div class="t" style="left:423.00px;top:716.50px;font-size:27px;line-height:30.00px;color:#14ee20;transform:scaleX(0.9496);-webkit-text-stroke:0.3px #14ee20;">dBrA</div>
<div class="b" style="left:498.5px;top:618px;width:485px;height:21px;background:#dbe5e8;"></div>
<div class="b" style="left:498.5px;top:639px;width:485px;height:1px;background:#b5bcbf;"></div>
<div class="b" style="left:498.5px;top:640px;width:485px;height:112px;background:#dbe5e8;"></div>
<div class="t" style="left:501.50px;top:621.20px;font-size:13.5px;line-height:15.00px;color:#000;font-weight:bold;transform:scaleX(0.9761);">SINAD</div>
<div class="b" style="left:550px;top:618px;width:64px;height:21px;background:#fff;"></div>
<div class="t" style="left:554.00px;top:622.50px;font-size:11px;line-height:12.00px;color:#222;">dB</div>
<svg class="b" style="left:607px;top:627.7px;" width="6" height="4" viewBox="0 0 6 4"><path d="M0.2,0 H4.8 L2.5,2.6 Z" fill="#222"/></svg>
<svg class="b" style="left:617.1px;top:622px;" width="13.3" height="12.8" viewBox="0 0 13.3 12.8"><rect width="13.3" height="12.8" fill="#1f3f58"/><rect x="1" y="2.3" width="11.3" height="8.3" fill="#fff"/><rect x="1" y="3.6" width="11.3" height="5.7" fill="#566f90"/><path d="M1.6,8.6 L5,5.6 L7.8,8.2 L12,4.2" stroke="#fff" stroke-width="0.9" fill="none"/></svg>
<svg class="b" style="left:632.2px;top:627.7px;" width="6" height="4" viewBox="0 0 6 4"><path d="M0.2,0 H4.8 L2.5,2.6 Z" fill="#111"/></svg>
<svg class="b" style="left:643px;top:622px;" width="13" height="13" viewBox="0 0 13 13"><rect width="13" height="13" fill="#2d4a5c"/><rect x="5.4" y="1.6" width="2.2" height="2.6" fill="#fff" transform="rotate(0 6.5 6.5)"/><rect x="5.4" y="1.6" width="2.2" height="2.6" fill="#fff" transform="rotate(45 6.5 6.5)"/><rect x="5.4" y="1.6" width="2.2" height="2.6" fill="#fff" transform="rotate(90 6.5 6.5)"/><rect x="5.4" y="1.6" width="2.2" height="2.6" fill="#fff" transform="rotate(135 6.5 6.5)"/><rect x="5.4" y="1.6" width="2.2" height="2.6" fill="#fff" transform="rotate(180 6.5 6.5)"/><rect x="5.4" y="1.6" width="2.2" height="2.6" fill="#fff" transform="rotate(225 6.5 6.5)"/><rect x="5.4" y="1.6" width="2.2" height="2.6" fill="#fff" transform="rotate(270 6.5 6.5)"/><rect x="5.4" y="1.6" width="2.2" height="2.6" fill="#fff" transform="rotate(315 6.5 6.5)"/><circle cx="6.5" cy="6.5" r="3.3" fill="#fff"/><circle cx="6.5" cy="6.5" r="1.5" fill="#2d4a5c"/></svg>
<div class="b" style="left:941px;top:621px;width:1.5px;height:16px;background:#e8eef0;"></div>
<svg class="b" style="left:947.5px;top:623px;" width="10.3" height="10.6" viewBox="0 0 10.3 10.6"><path transform="scale(0.936 0.964)" d="M4,1.1 H1.1 V9.7 H9.9 V6.9" stroke="#1b4e9a" stroke-width="1.9" fill="none"/><path transform="scale(0.936 0.964)" d="M5,6 L8.6,2.4" stroke="#1b4e9a" stroke-width="1.8"/><path transform="scale(0.936 0.964)" d="M5.6,0.2 H10.8 V5.4 Z" fill="#1b4e9a"/></svg>
<svg class="b" style="left:967.5px;top:623.6px;" width="10" height="10" viewBox="0 0 10 10"><path d="M1,1 L8.8,8.8 M8.8,1 L1,8.8" stroke="#1c3248" stroke-width="2"/></svg>
<div class="b" style="left:622.5px;top:644px;width:353px;height:34px;background:#000;"></div>
<div class="b" style="left:622.5px;top:678px;width:353px;height:17px;background:#808080;border:1px solid #cbcbcb;box-sizing:border-box;"></div>
<div class="b" style="left:499.5px;top:695.5px;width:477px;height:1px;background:#8f9699;"></div>
<div class="b" style="left:622.5px;top:697px;width:353px;height:17px;background:#808080;border:1px solid #cbcbcb;box-sizing:border-box;"></div>
<div class="b" style="left:622.5px;top:714px;width:353px;height:35px;background:#000;"></div>
<div class="b" style="left:623.5px;top:679px;width:246.6px;height:14.6px;background:#00f000;"></div>
<div class="b" style="left:623.5px;top:685.5px;width:352px;height:2px;background:#000;"></div>
<div class="b" style="left:623.5px;top:698px;width:246.6px;height:14.6px;background:#00f000;"></div>
<div class="b" style="left:623.5px;top:704.5px;width:352px;height:2px;background:#000;"></div>
<div class="t" style="left:503.50px;top:656.00px;font-size:25px;line-height:28.00px;color:#0a0a0a;transform:scaleX(1.0357);-webkit-text-stroke:0.3px #dbe5e8;">Ch1</div>
<div class="t" style="left:503.50px;top:710.00px;font-size:25px;line-height:28.00px;color:#0a0a0a;transform:scaleX(1.0466);-webkit-text-stroke:0.3px #dbe5e8;">Ch2</div>
<svg class="b" style="left:611.5px;top:665px;" width="9" height="8" viewBox="0 0 9 8"><path d="M0,0 H9 L4.5,8 Z" fill="#000"/></svg>
<svg class="b" style="left:611.5px;top:719px;" width="9" height="8" viewBox="0 0 9 8"><path d="M0,0 H9 L4.5,8 Z" fill="#000"/></svg>
<div class="t" style="left:838.10px;top:647.50px;font-size:27px;line-height:30.00px;color:#14ee20;transform:scaleX(0.9384);-webkit-text-stroke:0.3px #14ee20;">84.033</div>
<div class="t" style="left:838.10px;top:716.50px;font-size:27px;line-height:30.00px;color:#14ee20;transform:scaleX(0.9384);-webkit-text-stroke:0.3px #14ee20;">84.201</div>
<div class="t" style="left:939.60px;top:647.50px;font-size:27px;line-height:30.00px;color:#14ee20;transform:scaleX(0.9538);-webkit-text-stroke:0.3px #14ee20;">dB</div>
<div class="t" style="left:939.60px;top:716.50px;font-size:27px;line-height:30.00px;color:#14ee20;transform:scaleX(0.9538);-webkit-text-stroke:0.3px #14ee20;">dB</div>
<div class="b" style="left:8px;top:758px;width:485px;height:21px;background:#dbe5e8;"></div>
<div class="b" style="left:8px;top:779px;width:485px;height:1px;background:#b5bcbf;"></div>
<div class="b" style="left:8px;top:780px;width:485px;height:112px;background:#dbe5e8;"></div>
<div class="t" style="left:11.00px;top:761.20px;font-size:13.5px;line-height:15.00px;color:#000;font-weight:bold;transform:scaleX(0.9631);">Bandpass Level</div>
<div class="b" style="left:116px;top:758px;width:64px;height:21px;background:#fff;"></div>
<div class="t" style="left:120.00px;top:762.50px;font-size:11px;line-height:12.00px;color:#222;">Vrms</div>
<svg class="b" style="left:173px;top:767.7px;" width="6" height="4" viewBox="0 0 6 4"><path d="M0.2,0 H4.8 L2.5,2.6 Z" fill="#222"/></svg>
<svg class="b" style="left:183.1px;top:762px;" width="13.3" height="12.8" viewBox="0 0 13.3 12.8"><rect width="13.3" height="12.8" fill="#1f3f58"/><rect x="1" y="2.3" width="11.3" height="8.3" fill="#fff"/><rect x="1" y="3.6" width="11.3" height="5.7" fill="#566f90"/><path d="M1.6,8.6 L5,5.6 L7.8,8.2 L12,4.2" stroke="#fff" stroke-width="0.9" fill="none"/></svg>
<svg class="b" style="left:198.2px;top:767.7px;" width="6" height="4" viewBox="0 0 6 4"><path d="M0.2,0 H4.8 L2.5,2.6 Z" fill="#111"/></svg>
<svg class="b" style="left:209px;top:762px;" width="13" height="13" viewBox="0 0 13 13"><rect width="13" height="13" fill="#2d4a5c"/><rect x="5.4" y="1.6" width="2.2" height="2.6" fill="#fff" transform="rotate(0 6.5 6.5)"/><rect x="5.4" y="1.6" width="2.2" height="2.6" fill="#fff" transform="rotate(45 6.5 6.5)"/><rect x="5.4" y="1.6" width="2.2" height="2.6" fill="#fff" transform="rotate(90 6.5 6.5)"/><rect x="5.4" y="1.6" width="2.2" height="2.6" fill="#fff" transform="rotate(135 6.5 6.5)"/><rect x="5.4" y="1.6" width="2.2" height="2.6" fill="#fff" transform="rotate(180 6.5 6.5)"/><rect x="5.4" y="1.6" width="2.2" height="2.6" fill="#fff" transform="rotate(225 6.5 6.5)"/><rect x="5.4" y="1.6" width="2.2" height="2.6" fill="#fff" transform="rotate(270 6.5 6.5)"/><rect x="5.4" y="1.6" width="2.2" height="2.6" fill="#fff" transform="rotate(315 6.5 6.5)"/><circle cx="6.5" cy="6.5" r="3.3" fill="#fff"/><circle cx="6.5" cy="6.5" r="1.5" fill="#2d4a5c"/></svg>
<div class="b" style="left:450.5px;top:761px;width:1.5px;height:16px;background:#e8eef0;"></div>
<svg class="b" style="left:457px;top:763px;" width="10.3" height="10.6" viewBox="0 0 10.3 10.6"><path transform="scale(0.936 0.964)" d="M4,1.1 H1.1 V9.7 H9.9 V6.9" stroke="#1b4e9a" stroke-width="1.9" fill="none"/><path transform="scale(0.936 0.964)" d="M5,6 L8.6,2.4" stroke="#1b4e9a" stroke-width="1.8"/><path transform="scale(0.936 0.964)" d="M5.6,0.2 H10.8 V5.4 Z" fill="#1b4e9a"/></svg>
<svg class="b" style="left:477px;top:763.6px;" width="10" height="10" viewBox="0 0 10 10"><path d="M1,1 L8.8,8.8 M8.8,1 L1,8.8" stroke="#1c3248" stroke-width="2"/></svg>
<div class="b" style="left:132px;top:784px;width:353px;height:34px;background:#000;"></div>
<div class="b" style="left:132px;top:818px;width:353px;height:17px;background:#808080;border:1px solid #cbcbcb;box-sizing:border-box;"></div>
<div class="b" style="left:9px;top:835.5px;width:477px;height:1px;background:#8f9699;"></div>
<div class="b" style="left:132px;top:837px;width:353px;height:17px;background:#808080;border:1px solid #cbcbcb;box-sizing:border-box;"></div>
<div class="b" style="left:132px;top:854px;width:353px;height:35px;background:#000;"></div>
<div class="b" style="left:133px;top:819px;width:154px;height:14.6px;background:#00f000;"></div>
<div class="b" style="left:133px;top:825.5px;width:293px;height:2px;background:#000;"></div>
<div class="b" style="left:133px;top:838px;width:154px;height:14.6px;background:#00f000;"></div>
<div class="b" style="left:133px;top:844.5px;width:293px;height:2px;background:#000;"></div>
<div class="t" style="left:13.00px;top:796.00px;font-size:25px;line-height:28.00px;color:#0a0a0a;transform:scaleX(1.0357);-webkit-text-stroke:0.3px #dbe5e8;">Ch1</div>
<div class="t" style="left:13.00px;top:850.00px;font-size:25px;line-height:28.00px;color:#0a0a0a;transform:scaleX(1.0466);-webkit-text-stroke:0.3px #dbe5e8;">Ch2</div>
<svg class="b" style="left:121px;top:805px;" width="9" height="8" viewBox="0 0 9 8"><path d="M0,0 H9 L4.5,8 Z" fill="#000"/></svg>
<svg class="b" style="left:121px;top:859px;" width="9" height="8" viewBox="0 0 9 8"><path d="M0,0 H9 L4.5,8 Z" fill="#000"/></svg>
<div class="t" style="left:292.00px;top:787.50px;font-size:27px;line-height:30.00px;color:#14ee20;transform:scaleX(0.9176);-webkit-text-stroke:0.3px #14ee20;">50.25</div>
<div class="t" style="left:292.00px;top:856.50px;font-size:27px;line-height:30.00px;color:#14ee20;transform:scaleX(0.9176);-webkit-text-stroke:0.3px #14ee20;">50.18</div>
<div class="t" style="left:396.00px;top:787.50px;font-size:27px;line-height:30.00px;color:#14ee20;transform:scaleX(1.0061);-webkit-text-stroke:0.3px #14ee20;">mVrms</div>
<div class="t" style="left:396.00px;top:856.50px;font-size:27px;line-height:30.00px;color:#14ee20;transform:scaleX(1.0061);-webkit-text-stroke:0.3px #14ee20;">mVrms</div>
<svg class="b" style="left:499px;top:758px;" width="486" height="136" viewBox="0 0 486 136"><rect x="1.75" y="1.5" width="481.5" height="131.5" fill="#a9a9a9" stroke="#333" stroke-width="1.5"/></svg>
<svg class="b" style="left:696px;top:818.2px;" width="13" height="13.2" viewBox="0 0 13 13.2"><rect width="13" height="13" fill="#2d4a5c"/><path d="M6.5,2 V11 M2,6.5 H11" stroke="#fff" stroke-width="1.6"/></svg>
<div class="t" style="left:713.00px;top:818.20px;font-size:12px;line-height:14.00px;color:#222;transform:scaleX(1.0665);">Add meter...</div>
<div class="b" style="left:0px;top:898px;width:1000px;height:23px;background:#f0f0f0;"></div>
<div class="t" style="left:289.00px;top:902.50px;font-size:11px;line-height:12.00px;color:#333;">Output:</div>
<div class="b" style="left:332px;top:901px;width:159px;height:14px;background:#000;"></div>
<div class="t" style="left:335.00px;top:902.00px;font-size:10.5px;line-height:12.00px;color:#12dc12;transform:scaleX(1.0526);-webkit-text-stroke:0.35px #12dc12;">Analog Balanced 2 Ch, 40 ohm</div>
<div class="t" style="left:497.00px;top:902.50px;font-size:11px;line-height:12.00px;color:#333;transform:scaleX(1.0082);">Input 1:</div>
<div class="b" style="left:541px;top:901px;width:170px;height:14px;background:#000;"></div>
<div class="t" style="left:544.00px;top:902.00px;font-size:10.5px;line-height:12.00px;color:#12dc12;transform:scaleX(1.0483);-webkit-text-stroke:0.35px #12dc12;">Analog Balanced 2 Ch, 200 kohm</div>
<div class="b" style="left:714px;top:901px;width:71px;height:14px;background:#000;"></div>
<div class="t" style="left:717.00px;top:902.00px;font-size:10.5px;line-height:12.00px;color:#12dc12;transform:scaleX(1.0476);-webkit-text-stroke:0.35px #12dc12;">310.0 mVrms</div>
<div class="b" style="left:788px;top:901px;width:120px;height:14px;background:#000;"></div>
<div class="t" style="left:791.00px;top:902.00px;font-size:10.5px;line-height:12.00px;color:#12dc12;transform:scaleX(1.0475);-webkit-text-stroke:0.35px #12dc12;">AC (&lt;10 Hz) - 22.4 kHz</div>
<div class="t" style="left:914.00px;top:902.50px;font-size:11px;line-height:12.00px;color:#333;transform:scaleX(1.0082);">Input 2:</div>
<div class="b" style="left:958px;top:901px;width:34px;height:14px;background:#000;"></div>
<div class="t" style="left:961.00px;top:902.00px;font-size:10.5px;line-height:12.00px;color:#12dc12;transform:scaleX(1.1154);-webkit-text-stroke:0.35px #12dc12;">None</div>
</body></html>
